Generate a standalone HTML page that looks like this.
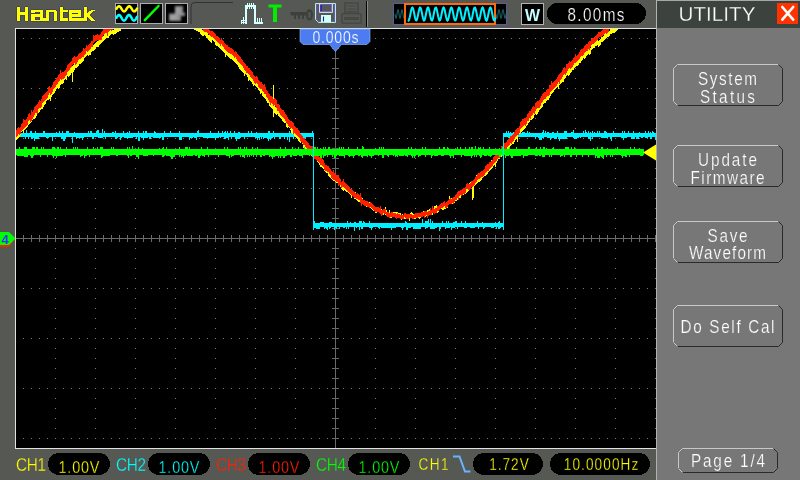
<!DOCTYPE html>
<html><head><meta charset="utf-8"><title>Hantek Utility</title>
<style>
html,body{margin:0;padding:0;background:#565854;overflow:hidden;}
svg{display:block;font-family:"Liberation Sans", sans-serif;will-change:transform;}
</style></head><body>
<svg width="800" height="480" viewBox="0 0 800 480">
<rect x="0" y="0" width="656" height="480" fill="#565854" shape-rendering="crispEdges" /><rect x="656" y="0" width="144" height="480" fill="#777777" shape-rendering="crispEdges" /><rect x="656" y="0" width="1" height="480" fill="#b4b0b8" shape-rendering="crispEdges" /><rect x="657" y="0" width="143" height="1" fill="#a8a8a8" shape-rendering="crispEdges" /><rect x="657" y="1" width="143" height="27" fill="#3c423d" shape-rendering="crispEdges" /><rect x="15" y="28" width="641" height="421" fill="#e0e0e0" shape-rendering="crispEdges" /><rect x="16" y="29" width="640" height="419" fill="#000000" shape-rendering="crispEdges" /><path d="M23 38h1v1h-1zM31 38h1v1h-1zM39 38h1v1h-1zM47 38h1v1h-1zM55 38h1v1h-1zM63 38h1v1h-1zM71 38h1v1h-1zM79 38h1v1h-1zM87 38h1v1h-1zM95 38h1v1h-1zM103 38h1v1h-1zM111 38h1v1h-1zM119 38h1v1h-1zM127 38h1v1h-1zM135 38h1v1h-1zM143 38h1v1h-1zM151 38h1v1h-1zM159 38h1v1h-1zM167 38h1v1h-1zM175 38h1v1h-1zM183 38h1v1h-1zM191 38h1v1h-1zM199 38h1v1h-1zM207 38h1v1h-1zM215 38h1v1h-1zM223 38h1v1h-1zM231 38h1v1h-1zM239 38h1v1h-1zM247 38h1v1h-1zM255 38h1v1h-1zM263 38h1v1h-1zM271 38h1v1h-1zM279 38h1v1h-1zM287 38h1v1h-1zM295 38h1v1h-1zM303 38h1v1h-1zM311 38h1v1h-1zM319 38h1v1h-1zM327 38h1v1h-1zM335 38h1v1h-1zM343 38h1v1h-1zM351 38h1v1h-1zM359 38h1v1h-1zM367 38h1v1h-1zM375 38h1v1h-1zM383 38h1v1h-1zM391 38h1v1h-1zM399 38h1v1h-1zM407 38h1v1h-1zM415 38h1v1h-1zM423 38h1v1h-1zM431 38h1v1h-1zM439 38h1v1h-1zM447 38h1v1h-1zM455 38h1v1h-1zM463 38h1v1h-1zM471 38h1v1h-1zM479 38h1v1h-1zM487 38h1v1h-1zM495 38h1v1h-1zM503 38h1v1h-1zM511 38h1v1h-1zM519 38h1v1h-1zM527 38h1v1h-1zM535 38h1v1h-1zM543 38h1v1h-1zM551 38h1v1h-1zM559 38h1v1h-1zM567 38h1v1h-1zM575 38h1v1h-1zM583 38h1v1h-1zM591 38h1v1h-1zM599 38h1v1h-1zM607 38h1v1h-1zM615 38h1v1h-1zM623 38h1v1h-1zM631 38h1v1h-1zM639 38h1v1h-1zM647 38h1v1h-1zM655 38h1v1h-1zM23 88h1v1h-1zM31 88h1v1h-1zM39 88h1v1h-1zM47 88h1v1h-1zM55 88h1v1h-1zM63 88h1v1h-1zM71 88h1v1h-1zM79 88h1v1h-1zM87 88h1v1h-1zM95 88h1v1h-1zM103 88h1v1h-1zM111 88h1v1h-1zM119 88h1v1h-1zM127 88h1v1h-1zM135 88h1v1h-1zM143 88h1v1h-1zM151 88h1v1h-1zM159 88h1v1h-1zM167 88h1v1h-1zM175 88h1v1h-1zM183 88h1v1h-1zM191 88h1v1h-1zM199 88h1v1h-1zM207 88h1v1h-1zM215 88h1v1h-1zM223 88h1v1h-1zM231 88h1v1h-1zM239 88h1v1h-1zM247 88h1v1h-1zM255 88h1v1h-1zM263 88h1v1h-1zM271 88h1v1h-1zM279 88h1v1h-1zM287 88h1v1h-1zM295 88h1v1h-1zM303 88h1v1h-1zM311 88h1v1h-1zM319 88h1v1h-1zM327 88h1v1h-1zM335 88h1v1h-1zM343 88h1v1h-1zM351 88h1v1h-1zM359 88h1v1h-1zM367 88h1v1h-1zM375 88h1v1h-1zM383 88h1v1h-1zM391 88h1v1h-1zM399 88h1v1h-1zM407 88h1v1h-1zM415 88h1v1h-1zM423 88h1v1h-1zM431 88h1v1h-1zM439 88h1v1h-1zM447 88h1v1h-1zM455 88h1v1h-1zM463 88h1v1h-1zM471 88h1v1h-1zM479 88h1v1h-1zM487 88h1v1h-1zM495 88h1v1h-1zM503 88h1v1h-1zM511 88h1v1h-1zM519 88h1v1h-1zM527 88h1v1h-1zM535 88h1v1h-1zM543 88h1v1h-1zM551 88h1v1h-1zM559 88h1v1h-1zM567 88h1v1h-1zM575 88h1v1h-1zM583 88h1v1h-1zM591 88h1v1h-1zM599 88h1v1h-1zM607 88h1v1h-1zM615 88h1v1h-1zM623 88h1v1h-1zM631 88h1v1h-1zM639 88h1v1h-1zM647 88h1v1h-1zM655 88h1v1h-1zM23 138h1v1h-1zM31 138h1v1h-1zM39 138h1v1h-1zM47 138h1v1h-1zM55 138h1v1h-1zM63 138h1v1h-1zM71 138h1v1h-1zM79 138h1v1h-1zM87 138h1v1h-1zM95 138h1v1h-1zM103 138h1v1h-1zM111 138h1v1h-1zM119 138h1v1h-1zM127 138h1v1h-1zM135 138h1v1h-1zM143 138h1v1h-1zM151 138h1v1h-1zM159 138h1v1h-1zM167 138h1v1h-1zM175 138h1v1h-1zM183 138h1v1h-1zM191 138h1v1h-1zM199 138h1v1h-1zM207 138h1v1h-1zM215 138h1v1h-1zM223 138h1v1h-1zM231 138h1v1h-1zM239 138h1v1h-1zM247 138h1v1h-1zM255 138h1v1h-1zM263 138h1v1h-1zM271 138h1v1h-1zM279 138h1v1h-1zM287 138h1v1h-1zM295 138h1v1h-1zM303 138h1v1h-1zM311 138h1v1h-1zM319 138h1v1h-1zM327 138h1v1h-1zM335 138h1v1h-1zM343 138h1v1h-1zM351 138h1v1h-1zM359 138h1v1h-1zM367 138h1v1h-1zM375 138h1v1h-1zM383 138h1v1h-1zM391 138h1v1h-1zM399 138h1v1h-1zM407 138h1v1h-1zM415 138h1v1h-1zM423 138h1v1h-1zM431 138h1v1h-1zM439 138h1v1h-1zM447 138h1v1h-1zM455 138h1v1h-1zM463 138h1v1h-1zM471 138h1v1h-1zM479 138h1v1h-1zM487 138h1v1h-1zM495 138h1v1h-1zM503 138h1v1h-1zM511 138h1v1h-1zM519 138h1v1h-1zM527 138h1v1h-1zM535 138h1v1h-1zM543 138h1v1h-1zM551 138h1v1h-1zM559 138h1v1h-1zM567 138h1v1h-1zM575 138h1v1h-1zM583 138h1v1h-1zM591 138h1v1h-1zM599 138h1v1h-1zM607 138h1v1h-1zM615 138h1v1h-1zM623 138h1v1h-1zM631 138h1v1h-1zM639 138h1v1h-1zM647 138h1v1h-1zM655 138h1v1h-1zM23 188h1v1h-1zM31 188h1v1h-1zM39 188h1v1h-1zM47 188h1v1h-1zM55 188h1v1h-1zM63 188h1v1h-1zM71 188h1v1h-1zM79 188h1v1h-1zM87 188h1v1h-1zM95 188h1v1h-1zM103 188h1v1h-1zM111 188h1v1h-1zM119 188h1v1h-1zM127 188h1v1h-1zM135 188h1v1h-1zM143 188h1v1h-1zM151 188h1v1h-1zM159 188h1v1h-1zM167 188h1v1h-1zM175 188h1v1h-1zM183 188h1v1h-1zM191 188h1v1h-1zM199 188h1v1h-1zM207 188h1v1h-1zM215 188h1v1h-1zM223 188h1v1h-1zM231 188h1v1h-1zM239 188h1v1h-1zM247 188h1v1h-1zM255 188h1v1h-1zM263 188h1v1h-1zM271 188h1v1h-1zM279 188h1v1h-1zM287 188h1v1h-1zM295 188h1v1h-1zM303 188h1v1h-1zM311 188h1v1h-1zM319 188h1v1h-1zM327 188h1v1h-1zM335 188h1v1h-1zM343 188h1v1h-1zM351 188h1v1h-1zM359 188h1v1h-1zM367 188h1v1h-1zM375 188h1v1h-1zM383 188h1v1h-1zM391 188h1v1h-1zM399 188h1v1h-1zM407 188h1v1h-1zM415 188h1v1h-1zM423 188h1v1h-1zM431 188h1v1h-1zM439 188h1v1h-1zM447 188h1v1h-1zM455 188h1v1h-1zM463 188h1v1h-1zM471 188h1v1h-1zM479 188h1v1h-1zM487 188h1v1h-1zM495 188h1v1h-1zM503 188h1v1h-1zM511 188h1v1h-1zM519 188h1v1h-1zM527 188h1v1h-1zM535 188h1v1h-1zM543 188h1v1h-1zM551 188h1v1h-1zM559 188h1v1h-1zM567 188h1v1h-1zM575 188h1v1h-1zM583 188h1v1h-1zM591 188h1v1h-1zM599 188h1v1h-1zM607 188h1v1h-1zM615 188h1v1h-1zM623 188h1v1h-1zM631 188h1v1h-1zM639 188h1v1h-1zM647 188h1v1h-1zM655 188h1v1h-1zM23 238h1v1h-1zM31 238h1v1h-1zM39 238h1v1h-1zM47 238h1v1h-1zM55 238h1v1h-1zM63 238h1v1h-1zM71 238h1v1h-1zM79 238h1v1h-1zM87 238h1v1h-1zM95 238h1v1h-1zM103 238h1v1h-1zM111 238h1v1h-1zM119 238h1v1h-1zM127 238h1v1h-1zM135 238h1v1h-1zM143 238h1v1h-1zM151 238h1v1h-1zM159 238h1v1h-1zM167 238h1v1h-1zM175 238h1v1h-1zM183 238h1v1h-1zM191 238h1v1h-1zM199 238h1v1h-1zM207 238h1v1h-1zM215 238h1v1h-1zM223 238h1v1h-1zM231 238h1v1h-1zM239 238h1v1h-1zM247 238h1v1h-1zM255 238h1v1h-1zM263 238h1v1h-1zM271 238h1v1h-1zM279 238h1v1h-1zM287 238h1v1h-1zM295 238h1v1h-1zM303 238h1v1h-1zM311 238h1v1h-1zM319 238h1v1h-1zM327 238h1v1h-1zM335 238h1v1h-1zM343 238h1v1h-1zM351 238h1v1h-1zM359 238h1v1h-1zM367 238h1v1h-1zM375 238h1v1h-1zM383 238h1v1h-1zM391 238h1v1h-1zM399 238h1v1h-1zM407 238h1v1h-1zM415 238h1v1h-1zM423 238h1v1h-1zM431 238h1v1h-1zM439 238h1v1h-1zM447 238h1v1h-1zM455 238h1v1h-1zM463 238h1v1h-1zM471 238h1v1h-1zM479 238h1v1h-1zM487 238h1v1h-1zM495 238h1v1h-1zM503 238h1v1h-1zM511 238h1v1h-1zM519 238h1v1h-1zM527 238h1v1h-1zM535 238h1v1h-1zM543 238h1v1h-1zM551 238h1v1h-1zM559 238h1v1h-1zM567 238h1v1h-1zM575 238h1v1h-1zM583 238h1v1h-1zM591 238h1v1h-1zM599 238h1v1h-1zM607 238h1v1h-1zM615 238h1v1h-1zM623 238h1v1h-1zM631 238h1v1h-1zM639 238h1v1h-1zM647 238h1v1h-1zM655 238h1v1h-1zM23 288h1v1h-1zM31 288h1v1h-1zM39 288h1v1h-1zM47 288h1v1h-1zM55 288h1v1h-1zM63 288h1v1h-1zM71 288h1v1h-1zM79 288h1v1h-1zM87 288h1v1h-1zM95 288h1v1h-1zM103 288h1v1h-1zM111 288h1v1h-1zM119 288h1v1h-1zM127 288h1v1h-1zM135 288h1v1h-1zM143 288h1v1h-1zM151 288h1v1h-1zM159 288h1v1h-1zM167 288h1v1h-1zM175 288h1v1h-1zM183 288h1v1h-1zM191 288h1v1h-1zM199 288h1v1h-1zM207 288h1v1h-1zM215 288h1v1h-1zM223 288h1v1h-1zM231 288h1v1h-1zM239 288h1v1h-1zM247 288h1v1h-1zM255 288h1v1h-1zM263 288h1v1h-1zM271 288h1v1h-1zM279 288h1v1h-1zM287 288h1v1h-1zM295 288h1v1h-1zM303 288h1v1h-1zM311 288h1v1h-1zM319 288h1v1h-1zM327 288h1v1h-1zM335 288h1v1h-1zM343 288h1v1h-1zM351 288h1v1h-1zM359 288h1v1h-1zM367 288h1v1h-1zM375 288h1v1h-1zM383 288h1v1h-1zM391 288h1v1h-1zM399 288h1v1h-1zM407 288h1v1h-1zM415 288h1v1h-1zM423 288h1v1h-1zM431 288h1v1h-1zM439 288h1v1h-1zM447 288h1v1h-1zM455 288h1v1h-1zM463 288h1v1h-1zM471 288h1v1h-1zM479 288h1v1h-1zM487 288h1v1h-1zM495 288h1v1h-1zM503 288h1v1h-1zM511 288h1v1h-1zM519 288h1v1h-1zM527 288h1v1h-1zM535 288h1v1h-1zM543 288h1v1h-1zM551 288h1v1h-1zM559 288h1v1h-1zM567 288h1v1h-1zM575 288h1v1h-1zM583 288h1v1h-1zM591 288h1v1h-1zM599 288h1v1h-1zM607 288h1v1h-1zM615 288h1v1h-1zM623 288h1v1h-1zM631 288h1v1h-1zM639 288h1v1h-1zM647 288h1v1h-1zM655 288h1v1h-1zM23 338h1v1h-1zM31 338h1v1h-1zM39 338h1v1h-1zM47 338h1v1h-1zM55 338h1v1h-1zM63 338h1v1h-1zM71 338h1v1h-1zM79 338h1v1h-1zM87 338h1v1h-1zM95 338h1v1h-1zM103 338h1v1h-1zM111 338h1v1h-1zM119 338h1v1h-1zM127 338h1v1h-1zM135 338h1v1h-1zM143 338h1v1h-1zM151 338h1v1h-1zM159 338h1v1h-1zM167 338h1v1h-1zM175 338h1v1h-1zM183 338h1v1h-1zM191 338h1v1h-1zM199 338h1v1h-1zM207 338h1v1h-1zM215 338h1v1h-1zM223 338h1v1h-1zM231 338h1v1h-1zM239 338h1v1h-1zM247 338h1v1h-1zM255 338h1v1h-1zM263 338h1v1h-1zM271 338h1v1h-1zM279 338h1v1h-1zM287 338h1v1h-1zM295 338h1v1h-1zM303 338h1v1h-1zM311 338h1v1h-1zM319 338h1v1h-1zM327 338h1v1h-1zM335 338h1v1h-1zM343 338h1v1h-1zM351 338h1v1h-1zM359 338h1v1h-1zM367 338h1v1h-1zM375 338h1v1h-1zM383 338h1v1h-1zM391 338h1v1h-1zM399 338h1v1h-1zM407 338h1v1h-1zM415 338h1v1h-1zM423 338h1v1h-1zM431 338h1v1h-1zM439 338h1v1h-1zM447 338h1v1h-1zM455 338h1v1h-1zM463 338h1v1h-1zM471 338h1v1h-1zM479 338h1v1h-1zM487 338h1v1h-1zM495 338h1v1h-1zM503 338h1v1h-1zM511 338h1v1h-1zM519 338h1v1h-1zM527 338h1v1h-1zM535 338h1v1h-1zM543 338h1v1h-1zM551 338h1v1h-1zM559 338h1v1h-1zM567 338h1v1h-1zM575 338h1v1h-1zM583 338h1v1h-1zM591 338h1v1h-1zM599 338h1v1h-1zM607 338h1v1h-1zM615 338h1v1h-1zM623 338h1v1h-1zM631 338h1v1h-1zM639 338h1v1h-1zM647 338h1v1h-1zM655 338h1v1h-1zM23 388h1v1h-1zM31 388h1v1h-1zM39 388h1v1h-1zM47 388h1v1h-1zM55 388h1v1h-1zM63 388h1v1h-1zM71 388h1v1h-1zM79 388h1v1h-1zM87 388h1v1h-1zM95 388h1v1h-1zM103 388h1v1h-1zM111 388h1v1h-1zM119 388h1v1h-1zM127 388h1v1h-1zM135 388h1v1h-1zM143 388h1v1h-1zM151 388h1v1h-1zM159 388h1v1h-1zM167 388h1v1h-1zM175 388h1v1h-1zM183 388h1v1h-1zM191 388h1v1h-1zM199 388h1v1h-1zM207 388h1v1h-1zM215 388h1v1h-1zM223 388h1v1h-1zM231 388h1v1h-1zM239 388h1v1h-1zM247 388h1v1h-1zM255 388h1v1h-1zM263 388h1v1h-1zM271 388h1v1h-1zM279 388h1v1h-1zM287 388h1v1h-1zM295 388h1v1h-1zM303 388h1v1h-1zM311 388h1v1h-1zM319 388h1v1h-1zM327 388h1v1h-1zM335 388h1v1h-1zM343 388h1v1h-1zM351 388h1v1h-1zM359 388h1v1h-1zM367 388h1v1h-1zM375 388h1v1h-1zM383 388h1v1h-1zM391 388h1v1h-1zM399 388h1v1h-1zM407 388h1v1h-1zM415 388h1v1h-1zM423 388h1v1h-1zM431 388h1v1h-1zM439 388h1v1h-1zM447 388h1v1h-1zM455 388h1v1h-1zM463 388h1v1h-1zM471 388h1v1h-1zM479 388h1v1h-1zM487 388h1v1h-1zM495 388h1v1h-1zM503 388h1v1h-1zM511 388h1v1h-1zM519 388h1v1h-1zM527 388h1v1h-1zM535 388h1v1h-1zM543 388h1v1h-1zM551 388h1v1h-1zM559 388h1v1h-1zM567 388h1v1h-1zM575 388h1v1h-1zM583 388h1v1h-1zM591 388h1v1h-1zM599 388h1v1h-1zM607 388h1v1h-1zM615 388h1v1h-1zM623 388h1v1h-1zM631 388h1v1h-1zM639 388h1v1h-1zM647 388h1v1h-1zM655 388h1v1h-1zM23 438h1v1h-1zM31 438h1v1h-1zM39 438h1v1h-1zM47 438h1v1h-1zM55 438h1v1h-1zM63 438h1v1h-1zM71 438h1v1h-1zM79 438h1v1h-1zM87 438h1v1h-1zM95 438h1v1h-1zM103 438h1v1h-1zM111 438h1v1h-1zM119 438h1v1h-1zM127 438h1v1h-1zM135 438h1v1h-1zM143 438h1v1h-1zM151 438h1v1h-1zM159 438h1v1h-1zM167 438h1v1h-1zM175 438h1v1h-1zM183 438h1v1h-1zM191 438h1v1h-1zM199 438h1v1h-1zM207 438h1v1h-1zM215 438h1v1h-1zM223 438h1v1h-1zM231 438h1v1h-1zM239 438h1v1h-1zM247 438h1v1h-1zM255 438h1v1h-1zM263 438h1v1h-1zM271 438h1v1h-1zM279 438h1v1h-1zM287 438h1v1h-1zM295 438h1v1h-1zM303 438h1v1h-1zM311 438h1v1h-1zM319 438h1v1h-1zM327 438h1v1h-1zM335 438h1v1h-1zM343 438h1v1h-1zM351 438h1v1h-1zM359 438h1v1h-1zM367 438h1v1h-1zM375 438h1v1h-1zM383 438h1v1h-1zM391 438h1v1h-1zM399 438h1v1h-1zM407 438h1v1h-1zM415 438h1v1h-1zM423 438h1v1h-1zM431 438h1v1h-1zM439 438h1v1h-1zM447 438h1v1h-1zM455 438h1v1h-1zM463 438h1v1h-1zM471 438h1v1h-1zM479 438h1v1h-1zM487 438h1v1h-1zM495 438h1v1h-1zM503 438h1v1h-1zM511 438h1v1h-1zM519 438h1v1h-1zM527 438h1v1h-1zM535 438h1v1h-1zM543 438h1v1h-1zM551 438h1v1h-1zM559 438h1v1h-1zM567 438h1v1h-1zM575 438h1v1h-1zM583 438h1v1h-1zM591 438h1v1h-1zM599 438h1v1h-1zM607 438h1v1h-1zM615 438h1v1h-1zM623 438h1v1h-1zM631 438h1v1h-1zM639 438h1v1h-1zM647 438h1v1h-1zM655 438h1v1h-1zM55 38h1v1h-1zM55 48h1v1h-1zM55 58h1v1h-1zM55 68h1v1h-1zM55 78h1v1h-1zM55 88h1v1h-1zM55 98h1v1h-1zM55 108h1v1h-1zM55 118h1v1h-1zM55 128h1v1h-1zM55 138h1v1h-1zM55 148h1v1h-1zM55 158h1v1h-1zM55 168h1v1h-1zM55 178h1v1h-1zM55 188h1v1h-1zM55 198h1v1h-1zM55 208h1v1h-1zM55 218h1v1h-1zM55 228h1v1h-1zM55 238h1v1h-1zM55 248h1v1h-1zM55 258h1v1h-1zM55 268h1v1h-1zM55 278h1v1h-1zM55 288h1v1h-1zM55 298h1v1h-1zM55 308h1v1h-1zM55 318h1v1h-1zM55 328h1v1h-1zM55 338h1v1h-1zM55 348h1v1h-1zM55 358h1v1h-1zM55 368h1v1h-1zM55 378h1v1h-1zM55 388h1v1h-1zM55 398h1v1h-1zM55 408h1v1h-1zM55 418h1v1h-1zM55 428h1v1h-1zM55 438h1v1h-1zM95 38h1v1h-1zM95 48h1v1h-1zM95 58h1v1h-1zM95 68h1v1h-1zM95 78h1v1h-1zM95 88h1v1h-1zM95 98h1v1h-1zM95 108h1v1h-1zM95 118h1v1h-1zM95 128h1v1h-1zM95 138h1v1h-1zM95 148h1v1h-1zM95 158h1v1h-1zM95 168h1v1h-1zM95 178h1v1h-1zM95 188h1v1h-1zM95 198h1v1h-1zM95 208h1v1h-1zM95 218h1v1h-1zM95 228h1v1h-1zM95 238h1v1h-1zM95 248h1v1h-1zM95 258h1v1h-1zM95 268h1v1h-1zM95 278h1v1h-1zM95 288h1v1h-1zM95 298h1v1h-1zM95 308h1v1h-1zM95 318h1v1h-1zM95 328h1v1h-1zM95 338h1v1h-1zM95 348h1v1h-1zM95 358h1v1h-1zM95 368h1v1h-1zM95 378h1v1h-1zM95 388h1v1h-1zM95 398h1v1h-1zM95 408h1v1h-1zM95 418h1v1h-1zM95 428h1v1h-1zM95 438h1v1h-1zM135 38h1v1h-1zM135 48h1v1h-1zM135 58h1v1h-1zM135 68h1v1h-1zM135 78h1v1h-1zM135 88h1v1h-1zM135 98h1v1h-1zM135 108h1v1h-1zM135 118h1v1h-1zM135 128h1v1h-1zM135 138h1v1h-1zM135 148h1v1h-1zM135 158h1v1h-1zM135 168h1v1h-1zM135 178h1v1h-1zM135 188h1v1h-1zM135 198h1v1h-1zM135 208h1v1h-1zM135 218h1v1h-1zM135 228h1v1h-1zM135 238h1v1h-1zM135 248h1v1h-1zM135 258h1v1h-1zM135 268h1v1h-1zM135 278h1v1h-1zM135 288h1v1h-1zM135 298h1v1h-1zM135 308h1v1h-1zM135 318h1v1h-1zM135 328h1v1h-1zM135 338h1v1h-1zM135 348h1v1h-1zM135 358h1v1h-1zM135 368h1v1h-1zM135 378h1v1h-1zM135 388h1v1h-1zM135 398h1v1h-1zM135 408h1v1h-1zM135 418h1v1h-1zM135 428h1v1h-1zM135 438h1v1h-1zM175 38h1v1h-1zM175 48h1v1h-1zM175 58h1v1h-1zM175 68h1v1h-1zM175 78h1v1h-1zM175 88h1v1h-1zM175 98h1v1h-1zM175 108h1v1h-1zM175 118h1v1h-1zM175 128h1v1h-1zM175 138h1v1h-1zM175 148h1v1h-1zM175 158h1v1h-1zM175 168h1v1h-1zM175 178h1v1h-1zM175 188h1v1h-1zM175 198h1v1h-1zM175 208h1v1h-1zM175 218h1v1h-1zM175 228h1v1h-1zM175 238h1v1h-1zM175 248h1v1h-1zM175 258h1v1h-1zM175 268h1v1h-1zM175 278h1v1h-1zM175 288h1v1h-1zM175 298h1v1h-1zM175 308h1v1h-1zM175 318h1v1h-1zM175 328h1v1h-1zM175 338h1v1h-1zM175 348h1v1h-1zM175 358h1v1h-1zM175 368h1v1h-1zM175 378h1v1h-1zM175 388h1v1h-1zM175 398h1v1h-1zM175 408h1v1h-1zM175 418h1v1h-1zM175 428h1v1h-1zM175 438h1v1h-1zM215 38h1v1h-1zM215 48h1v1h-1zM215 58h1v1h-1zM215 68h1v1h-1zM215 78h1v1h-1zM215 88h1v1h-1zM215 98h1v1h-1zM215 108h1v1h-1zM215 118h1v1h-1zM215 128h1v1h-1zM215 138h1v1h-1zM215 148h1v1h-1zM215 158h1v1h-1zM215 168h1v1h-1zM215 178h1v1h-1zM215 188h1v1h-1zM215 198h1v1h-1zM215 208h1v1h-1zM215 218h1v1h-1zM215 228h1v1h-1zM215 238h1v1h-1zM215 248h1v1h-1zM215 258h1v1h-1zM215 268h1v1h-1zM215 278h1v1h-1zM215 288h1v1h-1zM215 298h1v1h-1zM215 308h1v1h-1zM215 318h1v1h-1zM215 328h1v1h-1zM215 338h1v1h-1zM215 348h1v1h-1zM215 358h1v1h-1zM215 368h1v1h-1zM215 378h1v1h-1zM215 388h1v1h-1zM215 398h1v1h-1zM215 408h1v1h-1zM215 418h1v1h-1zM215 428h1v1h-1zM215 438h1v1h-1zM255 38h1v1h-1zM255 48h1v1h-1zM255 58h1v1h-1zM255 68h1v1h-1zM255 78h1v1h-1zM255 88h1v1h-1zM255 98h1v1h-1zM255 108h1v1h-1zM255 118h1v1h-1zM255 128h1v1h-1zM255 138h1v1h-1zM255 148h1v1h-1zM255 158h1v1h-1zM255 168h1v1h-1zM255 178h1v1h-1zM255 188h1v1h-1zM255 198h1v1h-1zM255 208h1v1h-1zM255 218h1v1h-1zM255 228h1v1h-1zM255 238h1v1h-1zM255 248h1v1h-1zM255 258h1v1h-1zM255 268h1v1h-1zM255 278h1v1h-1zM255 288h1v1h-1zM255 298h1v1h-1zM255 308h1v1h-1zM255 318h1v1h-1zM255 328h1v1h-1zM255 338h1v1h-1zM255 348h1v1h-1zM255 358h1v1h-1zM255 368h1v1h-1zM255 378h1v1h-1zM255 388h1v1h-1zM255 398h1v1h-1zM255 408h1v1h-1zM255 418h1v1h-1zM255 428h1v1h-1zM255 438h1v1h-1zM295 38h1v1h-1zM295 48h1v1h-1zM295 58h1v1h-1zM295 68h1v1h-1zM295 78h1v1h-1zM295 88h1v1h-1zM295 98h1v1h-1zM295 108h1v1h-1zM295 118h1v1h-1zM295 128h1v1h-1zM295 138h1v1h-1zM295 148h1v1h-1zM295 158h1v1h-1zM295 168h1v1h-1zM295 178h1v1h-1zM295 188h1v1h-1zM295 198h1v1h-1zM295 208h1v1h-1zM295 218h1v1h-1zM295 228h1v1h-1zM295 238h1v1h-1zM295 248h1v1h-1zM295 258h1v1h-1zM295 268h1v1h-1zM295 278h1v1h-1zM295 288h1v1h-1zM295 298h1v1h-1zM295 308h1v1h-1zM295 318h1v1h-1zM295 328h1v1h-1zM295 338h1v1h-1zM295 348h1v1h-1zM295 358h1v1h-1zM295 368h1v1h-1zM295 378h1v1h-1zM295 388h1v1h-1zM295 398h1v1h-1zM295 408h1v1h-1zM295 418h1v1h-1zM295 428h1v1h-1zM295 438h1v1h-1zM335 38h1v1h-1zM335 48h1v1h-1zM335 58h1v1h-1zM335 68h1v1h-1zM335 78h1v1h-1zM335 88h1v1h-1zM335 98h1v1h-1zM335 108h1v1h-1zM335 118h1v1h-1zM335 128h1v1h-1zM335 138h1v1h-1zM335 148h1v1h-1zM335 158h1v1h-1zM335 168h1v1h-1zM335 178h1v1h-1zM335 188h1v1h-1zM335 198h1v1h-1zM335 208h1v1h-1zM335 218h1v1h-1zM335 228h1v1h-1zM335 238h1v1h-1zM335 248h1v1h-1zM335 258h1v1h-1zM335 268h1v1h-1zM335 278h1v1h-1zM335 288h1v1h-1zM335 298h1v1h-1zM335 308h1v1h-1zM335 318h1v1h-1zM335 328h1v1h-1zM335 338h1v1h-1zM335 348h1v1h-1zM335 358h1v1h-1zM335 368h1v1h-1zM335 378h1v1h-1zM335 388h1v1h-1zM335 398h1v1h-1zM335 408h1v1h-1zM335 418h1v1h-1zM335 428h1v1h-1zM335 438h1v1h-1zM375 38h1v1h-1zM375 48h1v1h-1zM375 58h1v1h-1zM375 68h1v1h-1zM375 78h1v1h-1zM375 88h1v1h-1zM375 98h1v1h-1zM375 108h1v1h-1zM375 118h1v1h-1zM375 128h1v1h-1zM375 138h1v1h-1zM375 148h1v1h-1zM375 158h1v1h-1zM375 168h1v1h-1zM375 178h1v1h-1zM375 188h1v1h-1zM375 198h1v1h-1zM375 208h1v1h-1zM375 218h1v1h-1zM375 228h1v1h-1zM375 238h1v1h-1zM375 248h1v1h-1zM375 258h1v1h-1zM375 268h1v1h-1zM375 278h1v1h-1zM375 288h1v1h-1zM375 298h1v1h-1zM375 308h1v1h-1zM375 318h1v1h-1zM375 328h1v1h-1zM375 338h1v1h-1zM375 348h1v1h-1zM375 358h1v1h-1zM375 368h1v1h-1zM375 378h1v1h-1zM375 388h1v1h-1zM375 398h1v1h-1zM375 408h1v1h-1zM375 418h1v1h-1zM375 428h1v1h-1zM375 438h1v1h-1zM415 38h1v1h-1zM415 48h1v1h-1zM415 58h1v1h-1zM415 68h1v1h-1zM415 78h1v1h-1zM415 88h1v1h-1zM415 98h1v1h-1zM415 108h1v1h-1zM415 118h1v1h-1zM415 128h1v1h-1zM415 138h1v1h-1zM415 148h1v1h-1zM415 158h1v1h-1zM415 168h1v1h-1zM415 178h1v1h-1zM415 188h1v1h-1zM415 198h1v1h-1zM415 208h1v1h-1zM415 218h1v1h-1zM415 228h1v1h-1zM415 238h1v1h-1zM415 248h1v1h-1zM415 258h1v1h-1zM415 268h1v1h-1zM415 278h1v1h-1zM415 288h1v1h-1zM415 298h1v1h-1zM415 308h1v1h-1zM415 318h1v1h-1zM415 328h1v1h-1zM415 338h1v1h-1zM415 348h1v1h-1zM415 358h1v1h-1zM415 368h1v1h-1zM415 378h1v1h-1zM415 388h1v1h-1zM415 398h1v1h-1zM415 408h1v1h-1zM415 418h1v1h-1zM415 428h1v1h-1zM415 438h1v1h-1zM455 38h1v1h-1zM455 48h1v1h-1zM455 58h1v1h-1zM455 68h1v1h-1zM455 78h1v1h-1zM455 88h1v1h-1zM455 98h1v1h-1zM455 108h1v1h-1zM455 118h1v1h-1zM455 128h1v1h-1zM455 138h1v1h-1zM455 148h1v1h-1zM455 158h1v1h-1zM455 168h1v1h-1zM455 178h1v1h-1zM455 188h1v1h-1zM455 198h1v1h-1zM455 208h1v1h-1zM455 218h1v1h-1zM455 228h1v1h-1zM455 238h1v1h-1zM455 248h1v1h-1zM455 258h1v1h-1zM455 268h1v1h-1zM455 278h1v1h-1zM455 288h1v1h-1zM455 298h1v1h-1zM455 308h1v1h-1zM455 318h1v1h-1zM455 328h1v1h-1zM455 338h1v1h-1zM455 348h1v1h-1zM455 358h1v1h-1zM455 368h1v1h-1zM455 378h1v1h-1zM455 388h1v1h-1zM455 398h1v1h-1zM455 408h1v1h-1zM455 418h1v1h-1zM455 428h1v1h-1zM455 438h1v1h-1zM495 38h1v1h-1zM495 48h1v1h-1zM495 58h1v1h-1zM495 68h1v1h-1zM495 78h1v1h-1zM495 88h1v1h-1zM495 98h1v1h-1zM495 108h1v1h-1zM495 118h1v1h-1zM495 128h1v1h-1zM495 138h1v1h-1zM495 148h1v1h-1zM495 158h1v1h-1zM495 168h1v1h-1zM495 178h1v1h-1zM495 188h1v1h-1zM495 198h1v1h-1zM495 208h1v1h-1zM495 218h1v1h-1zM495 228h1v1h-1zM495 238h1v1h-1zM495 248h1v1h-1zM495 258h1v1h-1zM495 268h1v1h-1zM495 278h1v1h-1zM495 288h1v1h-1zM495 298h1v1h-1zM495 308h1v1h-1zM495 318h1v1h-1zM495 328h1v1h-1zM495 338h1v1h-1zM495 348h1v1h-1zM495 358h1v1h-1zM495 368h1v1h-1zM495 378h1v1h-1zM495 388h1v1h-1zM495 398h1v1h-1zM495 408h1v1h-1zM495 418h1v1h-1zM495 428h1v1h-1zM495 438h1v1h-1zM535 38h1v1h-1zM535 48h1v1h-1zM535 58h1v1h-1zM535 68h1v1h-1zM535 78h1v1h-1zM535 88h1v1h-1zM535 98h1v1h-1zM535 108h1v1h-1zM535 118h1v1h-1zM535 128h1v1h-1zM535 138h1v1h-1zM535 148h1v1h-1zM535 158h1v1h-1zM535 168h1v1h-1zM535 178h1v1h-1zM535 188h1v1h-1zM535 198h1v1h-1zM535 208h1v1h-1zM535 218h1v1h-1zM535 228h1v1h-1zM535 238h1v1h-1zM535 248h1v1h-1zM535 258h1v1h-1zM535 268h1v1h-1zM535 278h1v1h-1zM535 288h1v1h-1zM535 298h1v1h-1zM535 308h1v1h-1zM535 318h1v1h-1zM535 328h1v1h-1zM535 338h1v1h-1zM535 348h1v1h-1zM535 358h1v1h-1zM535 368h1v1h-1zM535 378h1v1h-1zM535 388h1v1h-1zM535 398h1v1h-1zM535 408h1v1h-1zM535 418h1v1h-1zM535 428h1v1h-1zM535 438h1v1h-1zM575 38h1v1h-1zM575 48h1v1h-1zM575 58h1v1h-1zM575 68h1v1h-1zM575 78h1v1h-1zM575 88h1v1h-1zM575 98h1v1h-1zM575 108h1v1h-1zM575 118h1v1h-1zM575 128h1v1h-1zM575 138h1v1h-1zM575 148h1v1h-1zM575 158h1v1h-1zM575 168h1v1h-1zM575 178h1v1h-1zM575 188h1v1h-1zM575 198h1v1h-1zM575 208h1v1h-1zM575 218h1v1h-1zM575 228h1v1h-1zM575 238h1v1h-1zM575 248h1v1h-1zM575 258h1v1h-1zM575 268h1v1h-1zM575 278h1v1h-1zM575 288h1v1h-1zM575 298h1v1h-1zM575 308h1v1h-1zM575 318h1v1h-1zM575 328h1v1h-1zM575 338h1v1h-1zM575 348h1v1h-1zM575 358h1v1h-1zM575 368h1v1h-1zM575 378h1v1h-1zM575 388h1v1h-1zM575 398h1v1h-1zM575 408h1v1h-1zM575 418h1v1h-1zM575 428h1v1h-1zM575 438h1v1h-1zM615 38h1v1h-1zM615 48h1v1h-1zM615 58h1v1h-1zM615 68h1v1h-1zM615 78h1v1h-1zM615 88h1v1h-1zM615 98h1v1h-1zM615 108h1v1h-1zM615 118h1v1h-1zM615 128h1v1h-1zM615 138h1v1h-1zM615 148h1v1h-1zM615 158h1v1h-1zM615 168h1v1h-1zM615 178h1v1h-1zM615 188h1v1h-1zM615 198h1v1h-1zM615 208h1v1h-1zM615 218h1v1h-1zM615 228h1v1h-1zM615 238h1v1h-1zM615 248h1v1h-1zM615 258h1v1h-1zM615 268h1v1h-1zM615 278h1v1h-1zM615 288h1v1h-1zM615 298h1v1h-1zM615 308h1v1h-1zM615 318h1v1h-1zM615 328h1v1h-1zM615 338h1v1h-1zM615 348h1v1h-1zM615 358h1v1h-1zM615 368h1v1h-1zM615 378h1v1h-1zM615 388h1v1h-1zM615 398h1v1h-1zM615 408h1v1h-1zM615 418h1v1h-1zM615 428h1v1h-1zM615 438h1v1h-1zM655 38h1v1h-1zM655 48h1v1h-1zM655 58h1v1h-1zM655 68h1v1h-1zM655 78h1v1h-1zM655 88h1v1h-1zM655 98h1v1h-1zM655 108h1v1h-1zM655 118h1v1h-1zM655 128h1v1h-1zM655 138h1v1h-1zM655 148h1v1h-1zM655 158h1v1h-1zM655 168h1v1h-1zM655 178h1v1h-1zM655 188h1v1h-1zM655 198h1v1h-1zM655 208h1v1h-1zM655 218h1v1h-1zM655 228h1v1h-1zM655 238h1v1h-1zM655 248h1v1h-1zM655 258h1v1h-1zM655 268h1v1h-1zM655 278h1v1h-1zM655 288h1v1h-1zM655 298h1v1h-1zM655 308h1v1h-1zM655 318h1v1h-1zM655 328h1v1h-1zM655 338h1v1h-1zM655 348h1v1h-1zM655 358h1v1h-1zM655 368h1v1h-1zM655 378h1v1h-1zM655 388h1v1h-1zM655 398h1v1h-1zM655 408h1v1h-1zM655 418h1v1h-1zM655 428h1v1h-1zM655 438h1v1h-1z" fill="#7c7c7c" shape-rendering="crispEdges"/><path d="M16 238h640v1h-640zM335 29h1v419h-1zM23 235h1v7h-1zM31 235h1v7h-1zM39 235h1v7h-1zM47 235h1v7h-1zM55 235h1v7h-1zM63 235h1v7h-1zM71 235h1v7h-1zM79 235h1v7h-1zM87 235h1v7h-1zM95 235h1v7h-1zM103 235h1v7h-1zM111 235h1v7h-1zM119 235h1v7h-1zM127 235h1v7h-1zM135 235h1v7h-1zM143 235h1v7h-1zM151 235h1v7h-1zM159 235h1v7h-1zM167 235h1v7h-1zM175 235h1v7h-1zM183 235h1v7h-1zM191 235h1v7h-1zM199 235h1v7h-1zM207 235h1v7h-1zM215 235h1v7h-1zM223 235h1v7h-1zM231 235h1v7h-1zM239 235h1v7h-1zM247 235h1v7h-1zM255 235h1v7h-1zM263 235h1v7h-1zM271 235h1v7h-1zM279 235h1v7h-1zM287 235h1v7h-1zM295 235h1v7h-1zM303 235h1v7h-1zM311 235h1v7h-1zM319 235h1v7h-1zM327 235h1v7h-1zM335 235h1v7h-1zM343 235h1v7h-1zM351 235h1v7h-1zM359 235h1v7h-1zM367 235h1v7h-1zM375 235h1v7h-1zM383 235h1v7h-1zM391 235h1v7h-1zM399 235h1v7h-1zM407 235h1v7h-1zM415 235h1v7h-1zM423 235h1v7h-1zM431 235h1v7h-1zM439 235h1v7h-1zM447 235h1v7h-1zM455 235h1v7h-1zM463 235h1v7h-1zM471 235h1v7h-1zM479 235h1v7h-1zM487 235h1v7h-1zM495 235h1v7h-1zM503 235h1v7h-1zM511 235h1v7h-1zM519 235h1v7h-1zM527 235h1v7h-1zM535 235h1v7h-1zM543 235h1v7h-1zM551 235h1v7h-1zM559 235h1v7h-1zM567 235h1v7h-1zM575 235h1v7h-1zM583 235h1v7h-1zM591 235h1v7h-1zM599 235h1v7h-1zM607 235h1v7h-1zM615 235h1v7h-1zM623 235h1v7h-1zM631 235h1v7h-1zM639 235h1v7h-1zM647 235h1v7h-1zM655 235h1v7h-1zM332 38h7v1h-7zM332 48h7v1h-7zM332 58h7v1h-7zM332 68h7v1h-7zM332 78h7v1h-7zM332 88h7v1h-7zM332 98h7v1h-7zM332 108h7v1h-7zM332 118h7v1h-7zM332 128h7v1h-7zM332 138h7v1h-7zM332 148h7v1h-7zM332 158h7v1h-7zM332 168h7v1h-7zM332 178h7v1h-7zM332 188h7v1h-7zM332 198h7v1h-7zM332 208h7v1h-7zM332 218h7v1h-7zM332 228h7v1h-7zM332 238h7v1h-7zM332 248h7v1h-7zM332 258h7v1h-7zM332 268h7v1h-7zM332 278h7v1h-7zM332 288h7v1h-7zM332 298h7v1h-7zM332 308h7v1h-7zM332 318h7v1h-7zM332 328h7v1h-7zM332 338h7v1h-7zM332 348h7v1h-7zM332 358h7v1h-7zM332 368h7v1h-7zM332 378h7v1h-7zM332 388h7v1h-7zM332 398h7v1h-7zM332 408h7v1h-7zM332 418h7v1h-7zM332 428h7v1h-7zM332 438h7v1h-7z" fill="#6a6a6a" shape-rendering="crispEdges"/><path d="M16 133h1v4h-1zM17 133h1v4h-1zM18 133h1v4h-1zM19 133h1v4h-1zM20 131h1v6h-1zM21 133h1v4h-1zM22 133h1v4h-1zM23 133h1v4h-1zM24 133h1v4h-1zM25 133h1v6h-1zM26 130h1v7h-1zM27 133h1v4h-1zM28 133h1v6h-1zM29 133h1v4h-1zM30 131h1v6h-1zM31 131h1v8h-1zM32 133h1v6h-1zM33 133h1v5h-1zM34 133h1v8h-1zM35 131h1v8h-1zM36 133h1v6h-1zM37 133h1v6h-1zM38 133h1v6h-1zM39 133h1v4h-1zM40 133h1v4h-1zM41 133h1v4h-1zM42 133h1v4h-1zM43 131h1v6h-1zM44 131h1v6h-1zM45 133h1v4h-1zM46 133h1v5h-1zM47 133h1v5h-1zM48 133h1v5h-1zM49 133h1v4h-1zM50 133h1v4h-1zM51 133h1v4h-1zM52 133h1v8h-1zM53 133h1v4h-1zM54 133h1v4h-1zM55 133h1v4h-1zM56 132h1v5h-1zM57 133h1v4h-1zM58 133h1v4h-1zM59 131h1v6h-1zM60 133h1v4h-1zM61 133h1v6h-1zM62 131h1v8h-1zM63 133h1v8h-1zM64 133h1v8h-1zM65 133h1v6h-1zM66 131h1v6h-1zM67 131h1v6h-1zM68 131h1v6h-1zM69 133h1v4h-1zM70 133h1v4h-1zM71 133h1v4h-1zM72 133h1v10h-1zM73 133h1v4h-1zM74 132h1v5h-1zM75 133h1v4h-1zM76 133h1v6h-1zM77 133h1v5h-1zM78 133h1v5h-1zM79 133h1v5h-1zM80 133h1v5h-1zM81 133h1v5h-1zM82 133h1v7h-1zM83 133h1v5h-1zM84 133h1v4h-1zM85 133h1v4h-1zM86 133h1v4h-1zM87 133h1v4h-1zM88 131h1v6h-1zM89 133h1v4h-1zM90 131h1v6h-1zM91 131h1v6h-1zM92 133h1v6h-1zM93 133h1v6h-1zM94 133h1v4h-1zM95 133h1v4h-1zM96 131h1v6h-1zM97 130h1v7h-1zM98 130h1v8h-1zM99 133h1v5h-1zM100 133h1v5h-1zM101 133h1v5h-1zM102 129h1v9h-1zM103 133h1v4h-1zM104 131h1v6h-1zM105 133h1v6h-1zM106 133h1v4h-1zM107 133h1v4h-1zM108 133h1v4h-1zM109 133h1v4h-1zM110 133h1v4h-1zM111 133h1v4h-1zM112 132h1v5h-1zM113 132h1v5h-1zM114 133h1v4h-1zM115 131h1v8h-1zM116 133h1v6h-1zM117 133h1v5h-1zM118 133h1v4h-1zM119 133h1v4h-1zM120 133h1v7h-1zM121 133h1v5h-1zM122 133h1v4h-1zM123 131h1v6h-1zM124 133h1v5h-1zM125 133h1v5h-1zM126 133h1v5h-1zM127 132h1v7h-1zM128 133h1v5h-1zM129 131h1v7h-1zM130 133h1v5h-1zM131 133h1v5h-1zM132 133h1v5h-1zM133 133h1v4h-1zM134 133h1v4h-1zM135 133h1v4h-1zM136 133h1v6h-1zM137 133h1v4h-1zM138 131h1v10h-1zM139 133h1v8h-1zM140 133h1v4h-1zM141 133h1v5h-1zM142 133h1v5h-1zM143 131h1v9h-1zM144 133h1v5h-1zM145 131h1v7h-1zM146 131h1v7h-1zM147 133h1v5h-1zM148 133h1v4h-1zM149 133h1v6h-1zM150 133h1v6h-1zM151 133h1v4h-1zM152 133h1v4h-1zM153 133h1v5h-1zM154 131h1v7h-1zM155 132h1v6h-1zM156 133h1v5h-1zM157 133h1v5h-1zM158 133h1v5h-1zM159 133h1v5h-1zM160 133h1v5h-1zM161 133h1v4h-1zM162 133h1v7h-1zM163 133h1v7h-1zM164 131h1v6h-1zM165 133h1v4h-1zM166 133h1v4h-1zM167 133h1v4h-1zM168 133h1v4h-1zM169 133h1v4h-1zM170 131h1v6h-1zM171 133h1v4h-1zM172 133h1v4h-1zM173 133h1v4h-1zM174 133h1v4h-1zM175 133h1v4h-1zM176 133h1v4h-1zM177 133h1v4h-1zM178 133h1v4h-1zM179 131h1v9h-1zM180 133h1v7h-1zM181 133h1v7h-1zM182 133h1v4h-1zM183 133h1v4h-1zM184 133h1v4h-1zM185 133h1v4h-1zM186 133h1v4h-1zM187 133h1v4h-1zM188 133h1v4h-1zM189 133h1v7h-1zM190 133h1v5h-1zM191 133h1v5h-1zM192 133h1v5h-1zM193 133h1v4h-1zM194 133h1v5h-1zM195 133h1v5h-1zM196 133h1v7h-1zM197 131h1v6h-1zM198 130h1v7h-1zM199 133h1v4h-1zM200 133h1v4h-1zM201 133h1v4h-1zM202 133h1v4h-1zM203 133h1v5h-1zM204 133h1v5h-1zM205 133h1v5h-1zM206 133h1v5h-1zM207 133h1v5h-1zM208 133h1v5h-1zM209 133h1v5h-1zM210 131h1v7h-1zM211 133h1v5h-1zM212 133h1v5h-1zM213 133h1v5h-1zM214 133h1v5h-1zM215 133h1v7h-1zM216 133h1v5h-1zM217 133h1v5h-1zM218 131h1v7h-1zM219 133h1v4h-1zM220 133h1v5h-1zM221 133h1v4h-1zM222 131h1v6h-1zM223 133h1v4h-1zM224 132h1v7h-1zM225 131h1v8h-1zM226 133h1v5h-1zM227 131h1v7h-1zM228 133h1v7h-1zM229 133h1v4h-1zM230 131h1v6h-1zM231 133h1v6h-1zM232 133h1v4h-1zM233 133h1v4h-1zM234 131h1v6h-1zM235 133h1v6h-1zM236 133h1v8h-1zM237 133h1v6h-1zM238 132h1v7h-1zM239 132h1v7h-1zM240 133h1v5h-1zM241 133h1v4h-1zM242 133h1v4h-1zM243 133h1v4h-1zM244 133h1v6h-1zM245 133h1v4h-1zM246 133h1v4h-1zM247 133h1v4h-1zM248 131h1v6h-1zM249 133h1v4h-1zM250 133h1v4h-1zM251 131h1v6h-1zM252 133h1v4h-1zM253 133h1v4h-1zM254 133h1v4h-1zM255 133h1v5h-1zM256 132h1v6h-1zM257 133h1v7h-1zM258 133h1v5h-1zM259 133h1v7h-1zM260 133h1v4h-1zM261 133h1v6h-1zM262 133h1v4h-1zM263 133h1v6h-1zM264 133h1v5h-1zM265 133h1v5h-1zM266 133h1v5h-1zM267 133h1v6h-1zM268 131h1v10h-1zM269 131h1v8h-1zM270 133h1v7h-1zM271 133h1v5h-1zM272 133h1v5h-1zM273 131h1v6h-1zM274 133h1v6h-1zM275 133h1v4h-1zM276 133h1v4h-1zM277 133h1v4h-1zM278 133h1v4h-1zM279 133h1v6h-1zM280 133h1v6h-1zM281 133h1v4h-1zM282 133h1v4h-1zM283 133h1v4h-1zM284 133h1v6h-1zM285 133h1v4h-1zM286 133h1v4h-1zM287 133h1v7h-1zM288 133h1v4h-1zM289 131h1v11h-1zM290 133h1v4h-1zM291 133h1v4h-1zM292 133h1v4h-1zM293 133h1v6h-1zM294 133h1v4h-1zM295 133h1v4h-1zM296 133h1v4h-1zM297 133h1v4h-1zM298 133h1v5h-1zM299 133h1v4h-1zM300 133h1v4h-1zM301 133h1v4h-1zM302 133h1v4h-1zM303 133h1v5h-1zM304 133h1v7h-1zM305 133h1v6h-1zM306 133h1v4h-1zM307 133h1v4h-1zM308 133h1v4h-1zM309 133h1v4h-1zM310 133h1v4h-1zM311 133h1v4h-1zM312 131h1v6h-1zM313 133h1v97h-1zM314 221h1v7h-1zM315 223h1v5h-1zM316 223h1v6h-1zM317 223h1v6h-1zM318 223h1v6h-1zM319 223h1v6h-1zM320 222h1v5h-1zM321 222h1v5h-1zM322 222h1v5h-1zM323 222h1v5h-1zM324 223h1v6h-1zM325 223h1v5h-1zM326 223h1v6h-1zM327 223h1v7h-1zM328 223h1v4h-1zM329 222h1v7h-1zM330 222h1v6h-1zM331 222h1v5h-1zM332 223h1v4h-1zM333 223h1v4h-1zM334 223h1v7h-1zM335 223h1v5h-1zM336 223h1v6h-1zM337 223h1v4h-1zM338 223h1v4h-1zM339 223h1v6h-1zM340 223h1v4h-1zM341 223h1v4h-1zM342 223h1v4h-1zM343 223h1v5h-1zM344 223h1v5h-1zM345 223h1v4h-1zM346 223h1v6h-1zM347 221h1v6h-1zM348 223h1v6h-1zM349 223h1v4h-1zM350 222h1v5h-1zM351 223h1v4h-1zM352 223h1v4h-1zM353 223h1v4h-1zM354 222h1v9h-1zM355 222h1v5h-1zM356 223h1v5h-1zM357 223h1v4h-1zM358 223h1v4h-1zM359 221h1v9h-1zM360 221h1v6h-1zM361 221h1v8h-1zM362 223h1v6h-1zM363 221h1v6h-1zM364 222h1v5h-1zM365 223h1v4h-1zM366 223h1v4h-1zM367 223h1v4h-1zM368 223h1v4h-1zM369 221h1v7h-1zM370 223h1v5h-1zM371 223h1v7h-1zM372 223h1v5h-1zM373 223h1v4h-1zM374 223h1v4h-1zM375 223h1v4h-1zM376 223h1v4h-1zM377 223h1v4h-1zM378 223h1v5h-1zM379 223h1v6h-1zM380 223h1v4h-1zM381 223h1v5h-1zM382 223h1v5h-1zM383 223h1v5h-1zM384 223h1v5h-1zM385 223h1v5h-1zM386 223h1v5h-1zM387 223h1v5h-1zM388 223h1v5h-1zM389 223h1v5h-1zM390 223h1v5h-1zM391 223h1v7h-1zM392 223h1v5h-1zM393 223h1v5h-1zM394 223h1v5h-1zM395 223h1v5h-1zM396 223h1v4h-1zM397 223h1v4h-1zM398 223h1v4h-1zM399 223h1v4h-1zM400 223h1v4h-1zM401 223h1v5h-1zM402 223h1v7h-1zM403 223h1v5h-1zM404 223h1v4h-1zM405 221h1v6h-1zM406 222h1v8h-1zM407 223h1v7h-1zM408 223h1v5h-1zM409 223h1v5h-1zM410 223h1v5h-1zM411 223h1v4h-1zM412 223h1v4h-1zM413 223h1v6h-1zM414 223h1v6h-1zM415 223h1v6h-1zM416 223h1v6h-1zM417 223h1v6h-1zM418 223h1v6h-1zM419 223h1v6h-1zM420 223h1v6h-1zM421 223h1v4h-1zM422 219h1v8h-1zM423 223h1v4h-1zM424 223h1v4h-1zM425 221h1v8h-1zM426 221h1v7h-1zM427 221h1v7h-1zM428 219h1v8h-1zM429 223h1v4h-1zM430 219h1v10h-1zM431 223h1v6h-1zM432 221h1v8h-1zM433 223h1v6h-1zM434 223h1v6h-1zM435 223h1v5h-1zM436 223h1v5h-1zM437 223h1v4h-1zM438 223h1v4h-1zM439 223h1v8h-1zM440 223h1v6h-1zM441 223h1v4h-1zM442 221h1v6h-1zM443 223h1v4h-1zM444 223h1v4h-1zM445 223h1v6h-1zM446 221h1v7h-1zM447 223h1v5h-1zM448 221h1v7h-1zM449 223h1v5h-1zM450 223h1v4h-1zM451 223h1v7h-1zM452 223h1v5h-1zM453 222h1v6h-1zM454 222h1v6h-1zM455 221h1v6h-1zM456 221h1v6h-1zM457 223h1v6h-1zM458 223h1v4h-1zM459 223h1v4h-1zM460 223h1v4h-1zM461 221h1v6h-1zM462 223h1v4h-1zM463 223h1v4h-1zM464 223h1v5h-1zM465 221h1v7h-1zM466 223h1v5h-1zM467 223h1v4h-1zM468 223h1v4h-1zM469 223h1v4h-1zM470 223h1v5h-1zM471 223h1v5h-1zM472 223h1v5h-1zM473 223h1v5h-1zM474 223h1v5h-1zM475 223h1v4h-1zM476 223h1v4h-1zM477 221h1v6h-1zM478 223h1v6h-1zM479 223h1v4h-1zM480 223h1v4h-1zM481 223h1v4h-1zM482 222h1v5h-1zM483 223h1v6h-1zM484 223h1v5h-1zM485 223h1v4h-1zM486 223h1v4h-1zM487 223h1v4h-1zM488 223h1v4h-1zM489 223h1v4h-1zM490 223h1v4h-1zM491 223h1v5h-1zM492 223h1v5h-1zM493 223h1v5h-1zM494 223h1v4h-1zM495 222h1v5h-1zM496 223h1v6h-1zM497 223h1v4h-1zM498 222h1v7h-1zM499 221h1v8h-1zM500 223h1v5h-1zM501 223h1v4h-1zM502 223h1v4h-1zM503 133h1v97h-1zM504 133h1v4h-1zM505 133h1v4h-1zM506 131h1v6h-1zM507 133h1v4h-1zM508 131h1v7h-1zM509 133h1v6h-1zM510 132h1v5h-1zM511 133h1v4h-1zM512 133h1v4h-1zM513 132h1v5h-1zM514 132h1v6h-1zM515 131h1v7h-1zM516 133h1v5h-1zM517 132h1v5h-1zM518 133h1v4h-1zM519 133h1v4h-1zM520 133h1v4h-1zM521 133h1v4h-1zM522 132h1v5h-1zM523 132h1v5h-1zM524 132h1v5h-1zM525 133h1v4h-1zM526 133h1v4h-1zM527 131h1v6h-1zM528 133h1v4h-1zM529 132h1v5h-1zM530 133h1v4h-1zM531 133h1v4h-1zM532 133h1v4h-1zM533 133h1v4h-1zM534 133h1v4h-1zM535 133h1v6h-1zM536 133h1v4h-1zM537 133h1v4h-1zM538 133h1v5h-1zM539 133h1v7h-1zM540 133h1v7h-1zM541 133h1v7h-1zM542 132h1v6h-1zM543 130h1v8h-1zM544 133h1v4h-1zM545 131h1v6h-1zM546 133h1v4h-1zM547 132h1v6h-1zM548 132h1v6h-1zM549 133h1v5h-1zM550 133h1v7h-1zM551 133h1v5h-1zM552 132h1v6h-1zM553 132h1v6h-1zM554 133h1v6h-1zM555 133h1v6h-1zM556 133h1v6h-1zM557 131h1v6h-1zM558 133h1v6h-1zM559 133h1v8h-1zM560 133h1v6h-1zM561 133h1v6h-1zM562 133h1v6h-1zM563 133h1v6h-1zM564 131h1v8h-1zM565 131h1v8h-1zM566 131h1v8h-1zM567 133h1v4h-1zM568 133h1v4h-1zM569 133h1v4h-1zM570 133h1v4h-1zM571 132h1v5h-1zM572 132h1v5h-1zM573 130h1v8h-1zM574 133h1v6h-1zM575 133h1v6h-1zM576 133h1v6h-1zM577 133h1v5h-1zM578 133h1v5h-1zM579 133h1v4h-1zM580 133h1v5h-1zM581 133h1v4h-1zM582 133h1v4h-1zM583 131h1v6h-1zM584 133h1v4h-1zM585 130h1v7h-1zM586 132h1v5h-1zM587 133h1v4h-1zM588 131h1v8h-1zM589 133h1v6h-1zM590 132h1v9h-1zM591 133h1v4h-1zM592 131h1v8h-1zM593 133h1v4h-1zM594 132h1v5h-1zM595 133h1v4h-1zM596 133h1v4h-1zM597 131h1v6h-1zM598 133h1v4h-1zM599 131h1v6h-1zM600 133h1v4h-1zM601 133h1v5h-1zM602 133h1v5h-1zM603 133h1v5h-1zM604 131h1v7h-1zM605 131h1v7h-1zM606 132h1v6h-1zM607 133h1v5h-1zM608 133h1v4h-1zM609 133h1v4h-1zM610 133h1v6h-1zM611 133h1v8h-1zM612 133h1v4h-1zM613 131h1v6h-1zM614 133h1v4h-1zM615 133h1v4h-1zM616 133h1v4h-1zM617 133h1v4h-1zM618 133h1v4h-1zM619 133h1v4h-1zM620 133h1v4h-1zM621 133h1v5h-1zM622 131h1v7h-1zM623 133h1v7h-1zM624 131h1v7h-1zM625 133h1v5h-1zM626 133h1v5h-1zM627 133h1v4h-1zM628 131h1v6h-1zM629 133h1v4h-1zM630 133h1v4h-1zM631 133h1v6h-1zM632 133h1v6h-1zM633 131h1v8h-1zM634 133h1v6h-1zM635 133h1v4h-1zM636 133h1v6h-1zM637 133h1v6h-1zM638 133h1v6h-1zM639 132h1v5h-1zM640 133h1v4h-1zM641 133h1v5h-1zM642 133h1v5h-1zM643 133h1v4h-1zM644 133h1v4h-1zM645 131h1v7h-1zM646 133h1v5h-1zM647 133h1v5h-1zM648 131h1v6h-1zM649 133h1v4h-1zM650 132h1v7h-1zM651 133h1v6h-1zM652 131h1v6h-1zM653 132h1v5h-1zM654 133h1v4h-1zM655 133h1v7h-1z" fill="#00f0ff" shape-rendering="crispEdges"/><path d="M16 133h1v7h-1zM17 132h1v7h-1zM18 131h1v7h-1zM19 130h1v7h-1zM20 128h1v7h-1zM21 125h1v7h-1zM22 124h1v7h-1zM23 126h1v7h-1zM24 123h1v7h-1zM25 122h1v7h-1zM26 121h1v7h-1zM27 119h1v8h-1zM28 118h1v7h-1zM29 117h1v7h-1zM30 116h1v7h-1zM31 115h1v7h-1zM32 113h1v7h-1zM33 112h1v7h-1zM34 112h1v7h-1zM35 111h1v7h-1zM36 109h1v7h-1zM37 107h1v7h-1zM38 106h1v7h-1zM39 104h1v8h-1zM40 103h1v7h-1zM41 102h1v7h-1zM42 102h1v7h-1zM43 99h1v8h-1zM44 98h1v7h-1zM45 96h1v8h-1zM46 94h1v7h-1zM47 93h1v7h-1zM48 93h1v7h-1zM49 92h1v7h-1zM50 92h1v9h-1zM51 90h1v7h-1zM52 88h1v7h-1zM53 87h1v7h-1zM54 86h1v7h-1zM55 84h1v7h-1zM56 83h1v6h-1zM57 80h1v8h-1zM58 82h1v7h-1zM59 81h1v7h-1zM60 78h1v7h-1zM61 78h1v6h-1zM62 77h1v7h-1zM63 76h1v7h-1zM64 73h1v7h-1zM65 72h1v7h-1zM66 73h1v7h-1zM67 70h1v6h-1zM68 71h1v6h-1zM69 69h1v7h-1zM70 68h1v7h-1zM71 66h1v7h-1zM72 66h1v16h-1zM73 65h1v7h-1zM74 63h1v7h-1zM75 60h1v8h-1zM76 62h1v6h-1zM77 61h1v6h-1zM78 60h1v6h-1zM79 58h1v6h-1zM80 58h1v6h-1zM81 57h1v6h-1zM82 56h1v6h-1zM83 55h1v6h-1zM84 52h1v6h-1zM85 51h1v6h-1zM86 50h1v6h-1zM87 49h1v6h-1zM88 50h1v6h-1zM89 49h1v6h-1zM90 48h1v7h-1zM91 46h1v6h-1zM92 45h1v6h-1zM93 45h1v6h-1zM94 44h1v6h-1zM95 43h1v6h-1zM96 42h1v5h-1zM97 41h1v6h-1zM98 41h1v6h-1zM99 39h1v6h-1zM100 38h1v6h-1zM101 37h1v6h-1zM102 37h1v5h-1zM103 36h1v5h-1zM104 34h1v6h-1zM105 33h1v6h-1zM106 33h1v5h-1zM107 33h1v5h-1zM108 32h1v6h-1zM109 30h1v6h-1zM110 30h1v5h-1zM111 29h1v5h-1zM112 29h1v5h-1zM113 30h1v5h-1zM114 29h1v5h-1zM115 29h1v5h-1zM116 29h1v4h-1zM117 29h1v3h-1zM118 29h1v3h-1zM119 29h1v2h-1zM120 29h1v2h-1zM194 29h1v1h-1zM195 29h1v1h-1zM196 29h1v2h-1zM197 29h1v2h-1zM198 29h1v3h-1zM199 29h1v3h-1zM200 29h1v5h-1zM201 29h1v6h-1zM202 30h1v6h-1zM203 30h1v6h-1zM204 30h1v5h-1zM205 31h1v5h-1zM206 32h1v6h-1zM207 33h1v5h-1zM208 35h1v5h-1zM209 35h1v6h-1zM210 36h1v6h-1zM211 37h1v6h-1zM212 35h1v5h-1zM213 36h1v5h-1zM214 36h1v6h-1zM215 39h1v6h-1zM216 40h1v6h-1zM217 40h1v6h-1zM218 41h1v6h-1zM219 43h1v5h-1zM220 43h1v6h-1zM221 44h1v6h-1zM222 45h1v6h-1zM223 46h1v6h-1zM224 47h1v6h-1zM225 48h1v9h-1zM226 49h1v6h-1zM227 50h1v6h-1zM228 51h1v6h-1zM229 52h1v6h-1zM230 53h1v6h-1zM231 53h1v6h-1zM232 54h1v6h-1zM233 55h1v6h-1zM234 56h1v6h-1zM235 57h1v6h-1zM236 58h1v6h-1zM237 59h1v6h-1zM238 60h1v7h-1zM239 62h1v7h-1zM240 63h1v7h-1zM241 64h1v7h-1zM242 64h1v8h-1zM243 66h1v7h-1zM244 70h1v6h-1zM245 68h1v6h-1zM246 69h1v6h-1zM247 70h1v7h-1zM248 72h1v9h-1zM249 73h1v7h-1zM250 74h1v7h-1zM251 74h1v8h-1zM252 78h1v6h-1zM253 78h1v8h-1zM254 78h1v7h-1zM255 79h1v7h-1zM256 80h1v7h-1zM257 82h1v6h-1zM258 83h1v7h-1zM259 84h1v7h-1zM260 87h1v7h-1zM261 86h1v7h-1zM262 89h1v7h-1zM263 90h1v7h-1zM264 91h1v7h-1zM265 92h1v7h-1zM266 94h1v7h-1zM267 96h1v7h-1zM268 96h1v7h-1zM269 98h1v8h-1zM270 99h1v8h-1zM271 101h1v7h-1zM272 102h1v7h-1zM273 85h1v32h-1zM274 105h1v8h-1zM275 107h1v7h-1zM276 108h1v7h-1zM277 107h1v7h-1zM278 109h1v7h-1zM279 110h1v7h-1zM280 111h1v7h-1zM281 112h1v7h-1zM282 114h1v7h-1zM283 115h1v7h-1zM284 116h1v7h-1zM285 116h1v7h-1zM286 120h1v7h-1zM287 121h1v7h-1zM288 120h1v7h-1zM289 121h1v7h-1zM290 123h1v7h-1zM291 126h1v7h-1zM292 127h1v7h-1zM293 127h1v7h-1zM294 129h1v7h-1zM295 130h1v7h-1zM296 131h1v7h-1zM297 132h1v7h-1zM298 134h1v7h-1zM299 135h1v7h-1zM300 136h1v7h-1zM301 135h1v7h-1zM302 137h1v7h-1zM303 141h1v7h-1zM304 142h1v7h-1zM305 142h1v7h-1zM306 143h1v7h-1zM307 144h1v7h-1zM308 146h1v9h-1zM309 147h1v7h-1zM310 148h1v7h-1zM311 149h1v7h-1zM312 151h1v6h-1zM313 152h1v7h-1zM314 151h1v7h-1zM315 152h1v7h-1zM316 153h1v7h-1zM317 155h1v7h-1zM318 157h1v6h-1zM319 159h1v6h-1zM320 161h1v6h-1zM321 160h1v7h-1zM322 161h1v7h-1zM323 162h1v7h-1zM324 164h1v7h-1zM325 165h1v7h-1zM326 167h1v6h-1zM327 167h1v6h-1zM328 170h1v6h-1zM329 171h1v6h-1zM330 172h1v6h-1zM331 173h1v6h-1zM332 174h1v6h-1zM333 175h1v6h-1zM334 175h1v6h-1zM335 176h1v6h-1zM336 177h1v6h-1zM337 177h1v6h-1zM338 178h1v6h-1zM339 179h1v6h-1zM340 181h1v6h-1zM341 183h1v6h-1zM342 184h1v6h-1zM343 185h1v6h-1zM344 185h1v5h-1zM345 185h1v6h-1zM346 186h1v6h-1zM347 186h1v6h-1zM348 187h1v6h-1zM349 188h1v6h-1zM350 190h1v5h-1zM351 193h1v5h-1zM352 190h1v6h-1zM353 191h1v6h-1zM354 193h1v6h-1zM355 192h1v7h-1zM356 195h1v5h-1zM357 195h1v6h-1zM358 196h1v6h-1zM359 197h1v5h-1zM360 197h1v5h-1zM361 197h1v6h-1zM362 198h1v5h-1zM363 200h1v5h-1zM364 200h1v6h-1zM365 201h1v5h-1zM366 202h1v5h-1zM367 201h1v5h-1zM368 202h1v5h-1zM369 202h1v5h-1zM370 203h1v5h-1zM371 204h1v5h-1zM372 205h1v5h-1zM373 206h1v5h-1zM374 206h1v5h-1zM375 208h1v5h-1zM376 208h1v5h-1zM377 207h1v5h-1zM378 207h1v5h-1zM379 208h1v4h-1zM380 209h1v5h-1zM381 209h1v5h-1zM382 210h1v4h-1zM383 210h1v5h-1zM384 210h1v4h-1zM385 207h1v8h-1zM386 210h1v5h-1zM387 213h1v4h-1zM388 213h1v4h-1zM389 210h1v8h-1zM390 213h1v5h-1zM391 212h1v6h-1zM392 212h1v4h-1zM393 212h1v5h-1zM394 212h1v5h-1zM395 212h1v4h-1zM396 212h1v4h-1zM397 212h1v4h-1zM398 213h1v4h-1zM399 213h1v5h-1zM400 213h1v5h-1zM401 215h1v5h-1zM402 214h1v5h-1zM403 215h1v4h-1zM404 215h1v4h-1zM405 215h1v4h-1zM406 215h1v4h-1zM407 215h1v4h-1zM408 215h1v4h-1zM409 216h1v5h-1zM410 213h1v5h-1zM411 212h1v6h-1zM412 213h1v5h-1zM413 214h1v5h-1zM414 214h1v5h-1zM415 215h1v4h-1zM416 214h1v4h-1zM417 214h1v4h-1zM418 213h1v5h-1zM419 213h1v6h-1zM420 213h1v5h-1zM421 213h1v4h-1zM422 212h1v4h-1zM423 211h1v5h-1zM424 213h1v5h-1zM425 213h1v4h-1zM426 211h1v5h-1zM427 210h1v5h-1zM428 210h1v4h-1zM429 209h1v5h-1zM430 210h1v5h-1zM431 210h1v4h-1zM432 210h1v5h-1zM433 208h1v5h-1zM434 206h1v5h-1zM435 206h1v5h-1zM436 205h1v6h-1zM437 208h1v5h-1zM438 207h1v5h-1zM439 205h1v5h-1zM440 204h1v5h-1zM441 204h1v5h-1zM442 205h1v5h-1zM443 205h1v5h-1zM444 204h1v5h-1zM445 204h1v5h-1zM446 203h1v5h-1zM447 202h1v6h-1zM448 200h1v5h-1zM449 196h1v8h-1zM450 198h1v6h-1zM451 198h1v5h-1zM452 199h1v5h-1zM453 198h1v6h-1zM454 198h1v5h-1zM455 196h1v5h-1zM456 195h1v6h-1zM457 194h1v6h-1zM458 194h1v5h-1zM459 193h1v5h-1zM460 191h1v7h-1zM461 190h1v6h-1zM462 189h1v6h-1zM463 189h1v6h-1zM464 189h1v5h-1zM465 188h1v6h-1zM466 187h1v6h-1zM467 186h1v6h-1zM468 185h1v6h-1zM469 183h1v6h-1zM470 182h1v6h-1zM471 181h1v6h-1zM472 181h1v19h-1zM473 180h1v18h-1zM474 179h1v7h-1zM475 179h1v6h-1zM476 175h1v9h-1zM477 177h1v6h-1zM478 176h1v6h-1zM479 176h1v6h-1zM480 175h1v6h-1zM481 173h1v7h-1zM482 171h1v7h-1zM483 170h1v7h-1zM484 169h1v7h-1zM485 169h1v7h-1zM486 168h1v7h-1zM487 167h1v7h-1zM488 166h1v6h-1zM489 165h1v6h-1zM490 164h1v6h-1zM491 160h1v9h-1zM492 162h1v6h-1zM493 159h1v7h-1zM494 158h1v7h-1zM495 157h1v10h-1zM496 154h1v9h-1zM497 154h1v7h-1zM498 153h1v6h-1zM499 152h1v7h-1zM500 150h1v7h-1zM501 150h1v7h-1zM502 149h1v7h-1zM503 148h1v7h-1zM504 147h1v6h-1zM505 145h1v7h-1zM506 144h1v7h-1zM507 143h1v7h-1zM508 142h1v7h-1zM509 141h1v6h-1zM510 139h1v7h-1zM511 138h1v7h-1zM512 137h1v7h-1zM513 137h1v7h-1zM514 135h1v7h-1zM515 133h1v7h-1zM516 132h1v7h-1zM517 132h1v10h-1zM518 128h1v7h-1zM519 127h1v7h-1zM520 126h1v7h-1zM521 125h1v7h-1zM522 124h1v7h-1zM523 123h1v7h-1zM524 122h1v7h-1zM525 121h1v7h-1zM526 119h1v7h-1zM527 118h1v7h-1zM528 116h1v7h-1zM529 115h1v7h-1zM530 113h1v7h-1zM531 113h1v7h-1zM532 112h1v7h-1zM533 111h1v7h-1zM534 108h1v7h-1zM535 107h1v7h-1zM536 108h1v7h-1zM537 106h1v8h-1zM538 102h1v10h-1zM539 103h1v7h-1zM540 102h1v7h-1zM541 100h1v8h-1zM542 100h1v7h-1zM543 97h1v7h-1zM544 94h1v9h-1zM545 96h1v7h-1zM546 94h1v7h-1zM547 93h1v7h-1zM548 93h1v7h-1zM549 91h1v7h-1zM550 89h1v7h-1zM551 87h1v7h-1zM552 86h1v7h-1zM553 85h1v7h-1zM554 84h1v6h-1zM555 82h1v7h-1zM556 81h1v7h-1zM557 79h1v8h-1zM558 82h1v7h-1zM559 79h1v6h-1zM560 77h1v7h-1zM561 76h1v7h-1zM562 75h1v7h-1zM563 75h1v7h-1zM564 73h1v6h-1zM565 72h1v6h-1zM566 70h1v6h-1zM567 68h1v7h-1zM568 69h1v7h-1zM569 68h1v7h-1zM570 66h1v7h-1zM571 65h1v7h-1zM572 64h1v6h-1zM573 61h1v9h-1zM574 62h1v6h-1zM575 61h1v6h-1zM576 60h1v6h-1zM577 60h1v6h-1zM578 58h1v7h-1zM579 56h1v7h-1zM580 56h1v7h-1zM581 54h1v7h-1zM582 53h1v7h-1zM583 51h1v7h-1zM584 52h1v7h-1zM585 51h1v7h-1zM586 50h1v6h-1zM587 49h1v6h-1zM588 48h1v6h-1zM589 49h1v6h-1zM590 48h1v6h-1zM591 44h1v6h-1zM592 43h1v6h-1zM593 42h1v6h-1zM594 42h1v6h-1zM595 40h1v6h-1zM596 41h1v5h-1zM597 40h1v5h-1zM598 41h1v6h-1zM599 40h1v6h-1zM600 39h1v6h-1zM601 36h1v6h-1zM602 37h1v5h-1zM603 36h1v5h-1zM604 34h1v6h-1zM605 33h1v6h-1zM606 33h1v5h-1zM607 32h1v5h-1zM608 31h1v6h-1zM609 31h1v5h-1zM610 29h1v5h-1zM611 29h1v5h-1zM612 29h1v4h-1zM613 29h1v4h-1zM614 29h1v4h-1zM615 29h1v3h-1zM616 29h1v2h-1zM617 29h1v1h-1z" fill="#ffff00" shape-rendering="crispEdges"/><path d="M16 130h1v7h-1zM17 128h1v8h-1zM18 127h1v7h-1zM19 128h1v7h-1zM20 127h1v7h-1zM21 124h1v7h-1zM22 123h1v7h-1zM23 119h1v10h-1zM24 120h1v8h-1zM25 120h1v7h-1zM26 119h1v7h-1zM27 117h1v8h-1zM28 114h1v7h-1zM29 113h1v7h-1zM30 115h1v7h-1zM31 110h1v11h-1zM32 112h1v7h-1zM33 110h1v7h-1zM34 107h1v8h-1zM35 106h1v7h-1zM36 105h1v8h-1zM37 104h1v10h-1zM38 102h1v7h-1zM39 100h1v8h-1zM40 101h1v7h-1zM41 99h1v8h-1zM42 96h1v7h-1zM43 95h1v7h-1zM44 94h1v7h-1zM45 93h1v7h-1zM46 92h1v7h-1zM47 91h1v7h-1zM48 87h1v8h-1zM49 86h1v7h-1zM50 88h1v7h-1zM51 87h1v7h-1zM52 85h1v7h-1zM53 82h1v7h-1zM54 81h1v7h-1zM55 80h1v7h-1zM56 78h1v7h-1zM57 77h1v7h-1zM58 75h1v7h-1zM59 74h1v7h-1zM60 70h1v9h-1zM61 73h1v7h-1zM62 72h1v7h-1zM63 72h1v7h-1zM64 71h1v7h-1zM65 70h1v6h-1zM66 68h1v7h-1zM67 65h1v7h-1zM68 64h1v7h-1zM69 63h1v7h-1zM70 62h1v6h-1zM71 61h1v6h-1zM72 58h1v7h-1zM73 57h1v7h-1zM74 56h1v7h-1zM75 57h1v8h-1zM76 57h1v7h-1zM77 56h1v6h-1zM78 54h1v6h-1zM79 53h1v6h-1zM80 53h1v6h-1zM81 52h1v6h-1zM82 51h1v6h-1zM83 48h1v9h-1zM84 49h1v6h-1zM85 48h1v6h-1zM86 45h1v6h-1zM87 46h1v6h-1zM88 45h1v6h-1zM89 44h1v6h-1zM90 43h1v6h-1zM91 41h1v6h-1zM92 41h1v6h-1zM93 35h1v8h-1zM94 36h1v6h-1zM95 35h1v6h-1zM96 35h1v6h-1zM97 34h1v6h-1zM98 35h1v6h-1zM99 35h1v5h-1zM100 34h1v6h-1zM101 32h1v8h-1zM102 31h1v6h-1zM103 29h1v6h-1zM104 29h1v5h-1zM105 29h1v4h-1zM106 29h1v4h-1zM107 29h1v7h-1zM108 29h1v3h-1zM109 29h1v2h-1zM110 29h1v1h-1zM111 29h1v2h-1zM112 29h1v1h-1zM203 29h1v2h-1zM204 29h1v3h-1zM205 29h1v3h-1zM206 29h1v3h-1zM207 29h1v4h-1zM208 29h1v5h-1zM209 30h1v5h-1zM210 31h1v5h-1zM211 31h1v6h-1zM212 31h1v6h-1zM213 32h1v6h-1zM214 33h1v6h-1zM215 34h1v6h-1zM216 36h1v5h-1zM217 36h1v6h-1zM218 37h1v6h-1zM219 38h1v6h-1zM220 40h1v6h-1zM221 38h1v6h-1zM222 40h1v6h-1zM223 41h1v6h-1zM224 43h1v6h-1zM225 44h1v6h-1zM226 45h1v6h-1zM227 45h1v7h-1zM228 47h1v6h-1zM229 47h1v6h-1zM230 48h1v6h-1zM231 48h1v6h-1zM232 49h1v6h-1zM233 50h1v6h-1zM234 52h1v6h-1zM235 51h1v6h-1zM236 52h1v7h-1zM237 54h1v7h-1zM238 55h1v7h-1zM239 56h1v7h-1zM240 57h1v7h-1zM241 59h1v6h-1zM242 60h1v6h-1zM243 62h1v6h-1zM244 63h1v7h-1zM245 64h1v7h-1zM246 66h1v7h-1zM247 66h1v7h-1zM248 68h1v6h-1zM249 68h1v7h-1zM250 70h1v7h-1zM251 71h1v7h-1zM252 72h1v7h-1zM253 75h1v6h-1zM254 76h1v7h-1zM255 77h1v7h-1zM256 76h1v7h-1zM257 77h1v7h-1zM258 80h1v7h-1zM259 81h1v7h-1zM260 82h1v7h-1zM261 82h1v7h-1zM262 84h1v7h-1zM263 85h1v7h-1zM264 84h1v10h-1zM265 87h1v7h-1zM266 90h1v7h-1zM267 91h1v7h-1zM268 93h1v7h-1zM269 94h1v8h-1zM270 96h1v9h-1zM271 96h1v7h-1zM272 97h1v7h-1zM273 99h1v7h-1zM274 98h1v7h-1zM275 99h1v7h-1zM276 100h1v8h-1zM277 104h1v7h-1zM278 104h1v7h-1zM279 105h1v8h-1zM280 108h1v7h-1zM281 109h1v7h-1zM282 110h1v7h-1zM283 110h1v8h-1zM284 112h1v7h-1zM285 114h1v7h-1zM286 115h1v8h-1zM287 117h1v7h-1zM288 119h1v7h-1zM289 120h1v7h-1zM290 121h1v8h-1zM291 121h1v7h-1zM292 122h1v7h-1zM293 123h1v11h-1zM294 126h1v7h-1zM295 127h1v7h-1zM296 128h1v7h-1zM297 128h1v8h-1zM298 130h1v7h-1zM299 131h1v7h-1zM300 134h1v7h-1zM301 135h1v7h-1zM302 136h1v7h-1zM303 138h1v7h-1zM304 138h1v7h-1zM305 140h1v7h-1zM306 141h1v7h-1zM307 142h1v7h-1zM308 143h1v7h-1zM309 145h1v7h-1zM310 146h1v7h-1zM311 146h1v7h-1zM312 146h1v9h-1zM313 151h1v6h-1zM314 152h1v7h-1zM315 152h1v7h-1zM316 153h1v7h-1zM317 154h1v7h-1zM318 156h1v6h-1zM319 157h1v6h-1zM320 158h1v7h-1zM321 158h1v7h-1zM322 159h1v7h-1zM323 160h1v7h-1zM324 163h1v7h-1zM325 165h1v6h-1zM326 165h1v6h-1zM327 166h1v6h-1zM328 166h1v6h-1zM329 168h1v6h-1zM330 169h1v6h-1zM331 171h1v7h-1zM332 172h1v7h-1zM333 170h1v10h-1zM334 173h1v7h-1zM335 174h1v7h-1zM336 175h1v7h-1zM337 175h1v7h-1zM338 175h1v11h-1zM339 178h1v7h-1zM340 179h1v6h-1zM341 182h1v6h-1zM342 181h1v6h-1zM343 179h1v8h-1zM344 182h1v6h-1zM345 183h1v6h-1zM346 184h1v6h-1zM347 185h1v6h-1zM348 186h1v6h-1zM349 187h1v6h-1zM350 189h1v5h-1zM351 189h1v6h-1zM352 190h1v6h-1zM353 191h1v6h-1zM354 192h1v6h-1zM355 193h1v5h-1zM356 194h1v5h-1zM357 193h1v6h-1zM358 194h1v6h-1zM359 195h1v5h-1zM360 193h1v10h-1zM361 197h1v9h-1zM362 199h1v5h-1zM363 200h1v5h-1zM364 200h1v6h-1zM365 201h1v5h-1zM366 201h1v5h-1zM367 201h1v6h-1zM368 202h1v5h-1zM369 203h1v5h-1zM370 202h1v5h-1zM371 203h1v5h-1zM372 204h1v5h-1zM373 205h1v5h-1zM374 206h1v5h-1zM375 207h1v5h-1zM376 207h1v5h-1zM377 207h1v5h-1zM378 207h1v5h-1zM379 208h1v5h-1zM380 206h1v8h-1zM381 210h1v6h-1zM382 210h1v5h-1zM383 209h1v4h-1zM384 209h1v5h-1zM385 209h1v5h-1zM386 212h1v4h-1zM387 212h1v5h-1zM388 212h1v5h-1zM389 213h1v5h-1zM390 213h1v4h-1zM391 212h1v5h-1zM392 212h1v5h-1zM393 213h1v4h-1zM394 213h1v4h-1zM395 213h1v5h-1zM396 214h1v5h-1zM397 213h1v5h-1zM398 214h1v4h-1zM399 214h1v4h-1zM400 215h1v4h-1zM401 215h1v4h-1zM402 215h1v4h-1zM403 215h1v4h-1zM404 213h1v4h-1zM405 213h1v5h-1zM406 214h1v5h-1zM407 214h1v5h-1zM408 214h1v5h-1zM409 214h1v4h-1zM410 214h1v4h-1zM411 214h1v4h-1zM412 215h1v4h-1zM413 215h1v4h-1zM414 214h1v4h-1zM415 213h1v5h-1zM416 213h1v5h-1zM417 213h1v5h-1zM418 213h1v4h-1zM419 213h1v4h-1zM420 213h1v4h-1zM421 212h1v5h-1zM422 212h1v5h-1zM423 212h1v4h-1zM424 211h1v7h-1zM425 211h1v5h-1zM426 211h1v4h-1zM427 212h1v6h-1zM428 211h1v5h-1zM429 211h1v4h-1zM430 208h1v7h-1zM431 210h1v5h-1zM432 206h1v7h-1zM433 208h1v5h-1zM434 209h1v5h-1zM435 208h1v5h-1zM436 208h1v5h-1zM437 206h1v5h-1zM438 206h1v5h-1zM439 205h1v5h-1zM440 204h1v5h-1zM441 203h1v5h-1zM442 203h1v5h-1zM443 202h1v5h-1zM444 201h1v5h-1zM445 203h1v5h-1zM446 202h1v6h-1zM447 201h1v6h-1zM448 200h1v5h-1zM449 199h1v5h-1zM450 198h1v6h-1zM451 199h1v5h-1zM452 198h1v5h-1zM453 197h1v7h-1zM454 197h1v5h-1zM455 195h1v5h-1zM456 194h1v6h-1zM457 192h1v6h-1zM458 191h1v9h-1zM459 191h1v5h-1zM460 190h1v5h-1zM461 190h1v6h-1zM462 189h1v6h-1zM463 188h1v6h-1zM464 188h1v6h-1zM465 187h1v6h-1zM466 184h1v5h-1zM467 183h1v6h-1zM468 184h1v6h-1zM469 184h1v6h-1zM470 183h1v6h-1zM471 181h1v6h-1zM472 181h1v6h-1zM473 180h1v6h-1zM474 179h1v6h-1zM475 177h1v6h-1zM476 176h1v6h-1zM477 174h1v6h-1zM478 173h1v6h-1zM479 173h1v6h-1zM480 172h1v6h-1zM481 171h1v6h-1zM482 171h1v6h-1zM483 170h1v6h-1zM484 169h1v6h-1zM485 166h1v7h-1zM486 165h1v7h-1zM487 164h1v7h-1zM488 164h1v7h-1zM489 162h1v7h-1zM490 162h1v6h-1zM491 161h1v6h-1zM492 160h1v6h-1zM493 157h1v7h-1zM494 156h1v7h-1zM495 155h1v7h-1zM496 154h1v7h-1zM497 153h1v6h-1zM498 151h1v7h-1zM499 149h1v9h-1zM500 149h1v7h-1zM501 146h1v9h-1zM502 146h1v7h-1zM503 144h1v7h-1zM504 143h1v7h-1zM505 143h1v7h-1zM506 142h1v7h-1zM507 140h1v7h-1zM508 139h1v7h-1zM509 138h1v7h-1zM510 136h1v7h-1zM511 136h1v8h-1zM512 135h1v7h-1zM513 134h1v7h-1zM514 132h1v7h-1zM515 130h1v7h-1zM516 129h1v7h-1zM517 128h1v7h-1zM518 128h1v7h-1zM519 126h1v7h-1zM520 122h1v7h-1zM521 121h1v7h-1zM522 119h1v8h-1zM523 119h1v7h-1zM524 118h1v7h-1zM525 118h1v8h-1zM526 117h1v7h-1zM527 114h1v7h-1zM528 113h1v8h-1zM529 111h1v7h-1zM530 111h1v8h-1zM531 109h1v7h-1zM532 107h1v8h-1zM533 106h1v7h-1zM534 107h1v7h-1zM535 103h1v8h-1zM536 102h1v7h-1zM537 101h1v7h-1zM538 101h1v7h-1zM539 100h1v8h-1zM540 98h1v8h-1zM541 96h1v7h-1zM542 94h1v8h-1zM543 93h1v7h-1zM544 92h1v7h-1zM545 92h1v7h-1zM546 90h1v7h-1zM547 89h1v7h-1zM548 89h1v7h-1zM549 85h1v10h-1zM550 85h1v7h-1zM551 81h1v10h-1zM552 83h1v7h-1zM553 82h1v7h-1zM554 81h1v7h-1zM555 80h1v7h-1zM556 79h1v7h-1zM557 77h1v7h-1zM558 75h1v7h-1zM559 74h1v10h-1zM560 73h1v7h-1zM561 72h1v7h-1zM562 70h1v7h-1zM563 68h1v7h-1zM564 67h1v7h-1zM565 68h1v7h-1zM566 64h1v9h-1zM567 64h1v7h-1zM568 63h1v6h-1zM569 61h1v7h-1zM570 62h1v7h-1zM571 61h1v7h-1zM572 60h1v7h-1zM573 58h1v7h-1zM574 57h1v6h-1zM575 54h1v9h-1zM576 56h1v6h-1zM577 55h1v6h-1zM578 54h1v6h-1zM579 52h1v7h-1zM580 50h1v7h-1zM581 49h1v7h-1zM582 49h1v7h-1zM583 48h1v7h-1zM584 46h1v7h-1zM585 45h1v7h-1zM586 44h1v7h-1zM587 44h1v7h-1zM588 42h1v7h-1zM589 41h1v9h-1zM590 41h1v6h-1zM591 39h1v6h-1zM592 38h1v6h-1zM593 38h1v6h-1zM594 37h1v6h-1zM595 36h1v6h-1zM596 35h1v6h-1zM597 34h1v6h-1zM598 32h1v6h-1zM599 32h1v5h-1zM600 32h1v5h-1zM601 31h1v6h-1zM602 30h1v6h-1zM603 29h1v6h-1zM604 29h1v5h-1zM605 29h1v4h-1zM606 29h1v5h-1zM607 29h1v4h-1zM608 29h1v3h-1z" fill="#ff2000" shape-rendering="crispEdges"/><path d="M16 149h1v6h-1zM17 149h1v7h-1zM18 149h1v7h-1zM19 147h1v9h-1zM20 149h1v7h-1zM21 149h1v7h-1zM22 149h1v7h-1zM23 149h1v7h-1zM24 147h1v10h-1zM25 147h1v10h-1zM26 147h1v10h-1zM27 149h1v8h-1zM28 149h1v6h-1zM29 149h1v6h-1zM30 149h1v7h-1zM31 149h1v9h-1zM32 147h1v11h-1zM33 147h1v9h-1zM34 147h1v8h-1zM35 149h1v6h-1zM36 147h1v8h-1zM37 147h1v8h-1zM38 149h1v6h-1zM39 149h1v6h-1zM40 149h1v8h-1zM41 147h1v8h-1zM42 149h1v6h-1zM43 147h1v8h-1zM44 149h1v6h-1zM45 149h1v6h-1zM46 149h1v6h-1zM47 149h1v8h-1zM48 149h1v6h-1zM49 149h1v6h-1zM50 149h1v6h-1zM51 149h1v6h-1zM52 147h1v9h-1zM53 147h1v11h-1zM54 147h1v9h-1zM55 149h1v7h-1zM56 149h1v9h-1zM57 147h1v9h-1zM58 147h1v9h-1zM59 149h1v7h-1zM60 147h1v9h-1zM61 149h1v7h-1zM62 149h1v7h-1zM63 149h1v6h-1zM64 149h1v6h-1zM65 149h1v8h-1zM66 147h1v8h-1zM67 149h1v6h-1zM68 149h1v6h-1zM69 149h1v6h-1zM70 149h1v6h-1zM71 149h1v6h-1zM72 149h1v6h-1zM73 147h1v8h-1zM74 149h1v6h-1zM75 147h1v8h-1zM76 149h1v6h-1zM77 147h1v8h-1zM78 149h1v6h-1zM79 149h1v6h-1zM80 149h1v8h-1zM81 149h1v7h-1zM82 149h1v7h-1zM83 149h1v6h-1zM84 149h1v9h-1zM85 149h1v7h-1zM86 149h1v7h-1zM87 147h1v8h-1zM88 149h1v6h-1zM89 149h1v8h-1zM90 149h1v6h-1zM91 149h1v6h-1zM92 149h1v6h-1zM93 147h1v8h-1zM94 149h1v6h-1zM95 149h1v6h-1zM96 149h1v6h-1zM97 147h1v8h-1zM98 149h1v6h-1zM99 149h1v6h-1zM100 147h1v8h-1zM101 147h1v11h-1zM102 147h1v10h-1zM103 149h1v7h-1zM104 149h1v7h-1zM105 149h1v7h-1zM106 149h1v7h-1zM107 149h1v7h-1zM108 149h1v7h-1zM109 149h1v7h-1zM110 149h1v6h-1zM111 147h1v8h-1zM112 149h1v6h-1zM113 147h1v8h-1zM114 149h1v6h-1zM115 149h1v6h-1zM116 149h1v7h-1zM117 149h1v7h-1zM118 149h1v6h-1zM119 149h1v6h-1zM120 149h1v6h-1zM121 149h1v6h-1zM122 149h1v6h-1zM123 149h1v6h-1zM124 149h1v6h-1zM125 149h1v6h-1zM126 149h1v6h-1zM127 147h1v9h-1zM128 149h1v9h-1zM129 147h1v8h-1zM130 149h1v7h-1zM131 149h1v7h-1zM132 146h1v9h-1zM133 149h1v6h-1zM134 149h1v6h-1zM135 149h1v6h-1zM136 149h1v8h-1zM137 149h1v8h-1zM138 147h1v12h-1zM139 149h1v6h-1zM140 149h1v6h-1zM141 149h1v6h-1zM142 148h1v7h-1zM143 149h1v7h-1zM144 149h1v7h-1zM145 149h1v7h-1zM146 149h1v7h-1zM147 149h1v7h-1zM148 149h1v6h-1zM149 149h1v6h-1zM150 149h1v6h-1zM151 149h1v6h-1zM152 149h1v6h-1zM153 149h1v7h-1zM154 149h1v6h-1zM155 149h1v6h-1zM156 149h1v6h-1zM157 149h1v6h-1zM158 149h1v6h-1zM159 148h1v7h-1zM160 149h1v6h-1zM161 149h1v6h-1zM162 148h1v9h-1zM163 147h1v10h-1zM164 149h1v7h-1zM165 149h1v6h-1zM166 147h1v9h-1zM167 149h1v7h-1zM168 149h1v7h-1zM169 149h1v7h-1zM170 149h1v8h-1zM171 149h1v10h-1zM172 149h1v10h-1zM173 149h1v8h-1zM174 149h1v8h-1zM175 149h1v6h-1zM176 149h1v6h-1zM177 149h1v6h-1zM178 149h1v6h-1zM179 147h1v10h-1zM180 149h1v6h-1zM181 149h1v8h-1zM182 149h1v7h-1zM183 149h1v9h-1zM184 149h1v7h-1zM185 147h1v9h-1zM186 147h1v8h-1zM187 147h1v9h-1zM188 149h1v7h-1zM189 147h1v9h-1zM190 149h1v7h-1zM191 149h1v7h-1zM192 149h1v7h-1zM193 149h1v6h-1zM194 149h1v6h-1zM195 149h1v7h-1zM196 149h1v7h-1zM197 149h1v6h-1zM198 149h1v9h-1zM199 149h1v9h-1zM200 149h1v7h-1zM201 147h1v8h-1zM202 149h1v7h-1zM203 149h1v7h-1zM204 149h1v8h-1zM205 149h1v6h-1zM206 149h1v6h-1zM207 147h1v8h-1zM208 149h1v8h-1zM209 149h1v6h-1zM210 149h1v6h-1zM211 149h1v6h-1zM212 149h1v6h-1zM213 149h1v6h-1zM214 149h1v6h-1zM215 149h1v6h-1zM216 149h1v6h-1zM217 149h1v6h-1zM218 149h1v8h-1zM219 149h1v6h-1zM220 149h1v6h-1zM221 149h1v6h-1zM222 149h1v6h-1zM223 149h1v6h-1zM224 147h1v8h-1zM225 149h1v6h-1zM226 149h1v7h-1zM227 147h1v9h-1zM228 149h1v7h-1zM229 149h1v9h-1zM230 149h1v6h-1zM231 149h1v8h-1zM232 149h1v7h-1zM233 149h1v7h-1zM234 149h1v6h-1zM235 149h1v6h-1zM236 149h1v6h-1zM237 149h1v6h-1zM238 147h1v8h-1zM239 149h1v6h-1zM240 147h1v10h-1zM241 149h1v6h-1zM242 149h1v8h-1zM243 149h1v8h-1zM244 147h1v11h-1zM245 149h1v6h-1zM246 147h1v8h-1zM247 149h1v8h-1zM248 149h1v6h-1zM249 149h1v8h-1zM250 149h1v6h-1zM251 149h1v7h-1zM252 147h1v8h-1zM253 149h1v8h-1zM254 149h1v6h-1zM255 149h1v6h-1zM256 149h1v8h-1zM257 147h1v8h-1zM258 149h1v6h-1zM259 149h1v6h-1zM260 149h1v8h-1zM261 149h1v8h-1zM262 149h1v6h-1zM263 149h1v7h-1zM264 149h1v7h-1zM265 149h1v6h-1zM266 149h1v6h-1zM267 149h1v6h-1zM268 149h1v6h-1zM269 149h1v8h-1zM270 149h1v7h-1zM271 149h1v8h-1zM272 149h1v10h-1zM273 149h1v8h-1zM274 149h1v8h-1zM275 149h1v7h-1zM276 149h1v7h-1zM277 149h1v7h-1zM278 149h1v9h-1zM279 149h1v7h-1zM280 147h1v11h-1zM281 149h1v7h-1zM282 149h1v7h-1zM283 149h1v9h-1zM284 149h1v9h-1zM285 147h1v9h-1zM286 149h1v7h-1zM287 149h1v6h-1zM288 149h1v6h-1zM289 149h1v6h-1zM290 149h1v8h-1zM291 149h1v8h-1zM292 147h1v8h-1zM293 149h1v7h-1zM294 149h1v7h-1zM295 149h1v7h-1zM296 149h1v7h-1zM297 149h1v6h-1zM298 147h1v8h-1zM299 149h1v7h-1zM300 149h1v7h-1zM301 149h1v7h-1zM302 149h1v9h-1zM303 149h1v6h-1zM304 147h1v8h-1zM305 149h1v6h-1zM306 149h1v6h-1zM307 149h1v6h-1zM308 149h1v6h-1zM309 149h1v7h-1zM310 149h1v6h-1zM311 149h1v6h-1zM312 149h1v8h-1zM313 149h1v8h-1zM314 147h1v9h-1zM315 147h1v9h-1zM316 149h1v7h-1zM317 147h1v9h-1zM318 149h1v7h-1zM319 149h1v7h-1zM320 148h1v10h-1zM321 149h1v9h-1zM322 149h1v6h-1zM323 147h1v11h-1zM324 149h1v7h-1zM325 147h1v9h-1zM326 149h1v6h-1zM327 149h1v8h-1zM328 147h1v8h-1zM329 147h1v8h-1zM330 149h1v6h-1zM331 149h1v6h-1zM332 149h1v8h-1zM333 149h1v6h-1zM334 149h1v9h-1zM335 149h1v9h-1zM336 149h1v7h-1zM337 149h1v6h-1zM338 149h1v6h-1zM339 147h1v9h-1zM340 149h1v7h-1zM341 147h1v9h-1zM342 149h1v7h-1zM343 147h1v9h-1zM344 149h1v9h-1zM345 149h1v6h-1zM346 149h1v6h-1zM347 149h1v6h-1zM348 147h1v9h-1zM349 149h1v8h-1zM350 149h1v7h-1zM351 149h1v7h-1zM352 149h1v7h-1zM353 149h1v9h-1zM354 149h1v7h-1zM355 149h1v6h-1zM356 149h1v6h-1zM357 147h1v8h-1zM358 149h1v7h-1zM359 149h1v7h-1zM360 149h1v6h-1zM361 149h1v8h-1zM362 146h1v12h-1zM363 147h1v9h-1zM364 149h1v7h-1zM365 149h1v7h-1zM366 149h1v7h-1zM367 149h1v8h-1zM368 149h1v6h-1zM369 149h1v7h-1zM370 149h1v7h-1zM371 149h1v9h-1zM372 149h1v7h-1zM373 149h1v7h-1zM374 149h1v6h-1zM375 148h1v7h-1zM376 149h1v6h-1zM377 149h1v6h-1zM378 149h1v7h-1zM379 147h1v8h-1zM380 149h1v6h-1zM381 147h1v8h-1zM382 149h1v9h-1zM383 147h1v11h-1zM384 149h1v6h-1zM385 149h1v6h-1zM386 149h1v6h-1zM387 149h1v7h-1zM388 149h1v8h-1zM389 149h1v6h-1zM390 149h1v6h-1zM391 149h1v6h-1zM392 149h1v6h-1zM393 149h1v7h-1zM394 149h1v6h-1zM395 149h1v8h-1zM396 149h1v7h-1zM397 149h1v8h-1zM398 149h1v6h-1zM399 149h1v7h-1zM400 149h1v7h-1zM401 149h1v7h-1zM402 149h1v7h-1zM403 149h1v7h-1zM404 149h1v6h-1zM405 149h1v7h-1zM406 149h1v7h-1zM407 149h1v8h-1zM408 147h1v8h-1zM409 149h1v6h-1zM410 149h1v6h-1zM411 147h1v9h-1zM412 149h1v9h-1zM413 149h1v7h-1zM414 149h1v9h-1zM415 149h1v7h-1zM416 149h1v6h-1zM417 149h1v6h-1zM418 149h1v8h-1zM419 149h1v7h-1zM420 149h1v7h-1zM421 149h1v6h-1zM422 147h1v8h-1zM423 149h1v6h-1zM424 149h1v6h-1zM425 147h1v10h-1zM426 149h1v6h-1zM427 149h1v6h-1zM428 149h1v6h-1zM429 149h1v6h-1zM430 149h1v6h-1zM431 149h1v9h-1zM432 149h1v7h-1zM433 149h1v6h-1zM434 149h1v7h-1zM435 149h1v7h-1zM436 149h1v7h-1zM437 149h1v7h-1zM438 149h1v6h-1zM439 147h1v8h-1zM440 149h1v6h-1zM441 149h1v7h-1zM442 149h1v7h-1zM443 147h1v9h-1zM444 147h1v8h-1zM445 149h1v6h-1zM446 149h1v6h-1zM447 147h1v8h-1zM448 148h1v7h-1zM449 149h1v7h-1zM450 149h1v9h-1zM451 149h1v7h-1zM452 149h1v7h-1zM453 149h1v9h-1zM454 149h1v6h-1zM455 149h1v6h-1zM456 149h1v6h-1zM457 147h1v8h-1zM458 149h1v6h-1zM459 149h1v6h-1zM460 147h1v8h-1zM461 149h1v8h-1zM462 149h1v6h-1zM463 149h1v6h-1zM464 149h1v7h-1zM465 147h1v9h-1zM466 149h1v7h-1zM467 149h1v7h-1zM468 149h1v7h-1zM469 147h1v9h-1zM470 149h1v7h-1zM471 147h1v11h-1zM472 147h1v9h-1zM473 149h1v6h-1zM474 149h1v8h-1zM475 146h1v9h-1zM476 149h1v8h-1zM477 149h1v6h-1zM478 147h1v8h-1zM479 148h1v8h-1zM480 147h1v11h-1zM481 149h1v8h-1zM482 149h1v6h-1zM483 147h1v8h-1zM484 149h1v7h-1zM485 149h1v7h-1zM486 149h1v7h-1zM487 149h1v6h-1zM488 149h1v7h-1zM489 147h1v9h-1zM490 149h1v8h-1zM491 149h1v7h-1zM492 149h1v6h-1zM493 149h1v6h-1zM494 149h1v6h-1zM495 149h1v6h-1zM496 149h1v6h-1zM497 149h1v6h-1zM498 149h1v6h-1zM499 148h1v9h-1zM500 149h1v8h-1zM501 149h1v6h-1zM502 147h1v9h-1zM503 149h1v7h-1zM504 149h1v6h-1zM505 149h1v9h-1zM506 149h1v7h-1zM507 149h1v7h-1zM508 149h1v7h-1zM509 147h1v8h-1zM510 149h1v7h-1zM511 149h1v9h-1zM512 149h1v9h-1zM513 149h1v7h-1zM514 149h1v7h-1zM515 149h1v7h-1zM516 147h1v9h-1zM517 149h1v7h-1zM518 149h1v7h-1zM519 149h1v7h-1zM520 149h1v7h-1zM521 149h1v6h-1zM522 149h1v6h-1zM523 149h1v9h-1zM524 149h1v7h-1zM525 149h1v7h-1zM526 149h1v7h-1zM527 149h1v7h-1zM528 147h1v8h-1zM529 147h1v8h-1zM530 149h1v6h-1zM531 149h1v6h-1zM532 149h1v6h-1zM533 149h1v6h-1zM534 149h1v6h-1zM535 149h1v7h-1zM536 147h1v9h-1zM537 149h1v7h-1zM538 149h1v6h-1zM539 149h1v7h-1zM540 147h1v9h-1zM541 149h1v6h-1zM542 149h1v8h-1zM543 147h1v10h-1zM544 147h1v10h-1zM545 149h1v6h-1zM546 148h1v7h-1zM547 149h1v6h-1zM548 149h1v6h-1zM549 149h1v8h-1zM550 149h1v6h-1zM551 149h1v8h-1zM552 148h1v7h-1zM553 147h1v8h-1zM554 149h1v6h-1zM555 149h1v6h-1zM556 149h1v6h-1zM557 149h1v6h-1zM558 149h1v6h-1zM559 149h1v6h-1zM560 149h1v8h-1zM561 149h1v7h-1zM562 149h1v7h-1zM563 149h1v6h-1zM564 149h1v8h-1zM565 147h1v8h-1zM566 147h1v8h-1zM567 147h1v8h-1zM568 147h1v8h-1zM569 149h1v6h-1zM570 149h1v8h-1zM571 147h1v10h-1zM572 149h1v6h-1zM573 149h1v6h-1zM574 147h1v8h-1zM575 149h1v6h-1zM576 149h1v8h-1zM577 149h1v6h-1zM578 149h1v6h-1zM579 149h1v6h-1zM580 149h1v6h-1zM581 149h1v6h-1zM582 149h1v8h-1zM583 149h1v6h-1zM584 149h1v6h-1zM585 149h1v6h-1zM586 149h1v6h-1zM587 149h1v6h-1zM588 149h1v8h-1zM589 149h1v6h-1zM590 149h1v6h-1zM591 149h1v6h-1zM592 149h1v6h-1zM593 148h1v7h-1zM594 149h1v6h-1zM595 149h1v9h-1zM596 149h1v7h-1zM597 147h1v11h-1zM598 149h1v9h-1zM599 149h1v9h-1zM600 149h1v7h-1zM601 147h1v10h-1zM602 147h1v11h-1zM603 149h1v10h-1zM604 149h1v6h-1zM605 149h1v6h-1zM606 149h1v8h-1zM607 148h1v7h-1zM608 149h1v6h-1zM609 149h1v6h-1zM610 149h1v8h-1zM611 149h1v6h-1zM612 149h1v8h-1zM613 149h1v6h-1zM614 149h1v6h-1zM615 149h1v6h-1zM616 149h1v6h-1zM617 147h1v8h-1zM618 149h1v6h-1zM619 149h1v6h-1zM620 149h1v6h-1zM621 149h1v7h-1zM622 149h1v9h-1zM623 149h1v7h-1zM624 149h1v7h-1zM625 149h1v8h-1zM626 149h1v8h-1zM627 149h1v6h-1zM628 149h1v6h-1zM629 149h1v8h-1zM630 147h1v8h-1zM631 149h1v6h-1zM632 149h1v6h-1zM633 149h1v6h-1zM634 147h1v8h-1zM635 149h1v6h-1zM636 149h1v6h-1zM637 149h1v6h-1zM638 149h1v6h-1zM639 148h1v7h-1zM640 149h1v7h-1zM641 149h1v7h-1zM642 149h1v7h-1zM643 149h1v6h-1z" fill="#00ff00" shape-rendering="crispEdges"/><path d="M313 133h1v97h-1zM503 133h1v97h-1z" fill="#00f0ff" shape-rendering="crispEdges"/><path d="M643 152.5L656 144.5V160.5Z" fill="#ffff00"/><path d="M0 233H9L15 239L9 247H0Z" fill="#ff2000"/><path d="M0 232H9L15.5 238.5L9 245H0Z" fill="#00ff00"/><text x="1.5" y="244" font-size="13" fill="#3333ff" text-anchor="start" font-weight="bold" >4</text><path d="M300 29H370V41.5L367 44.5H341.5L335.5 51.5L329.5 44.5H303L300 41.5Z" fill="#4c7cf0" stroke="#9cc4ff" stroke-width="0.6"/><text x="335.5" y="43" font-size="16" fill="#ffffff" text-anchor="middle" textLength="52.27" lengthAdjust="spacing" transform="translate(335.5 0) scale(0.88 1) translate(-335.5 0)" stroke="#4c7cf0" stroke-width="0.25">0.000s</text><path d="M17 7h3v14h-3zM25 7h3v14h-3zM20 12h5v3h-5zM31 10h12v2h-12zM31 12h4v1h-4zM40 12h3v9h-3zM31 14h12v3h-12zM31 17h4v3h-4zM31 20h12v1h-12zM43 18h3v3h-3zM46 10h3v11h-3zM46 10h10v2h-10zM54 11h3v10h-3zM60 7h3v14h-3zM63 10h5v2h-5zM63 18h5v3h-5zM69 10h12v3h-12zM69 13h3v8h-3zM78 13h3v1h-3zM69 14h12v3h-12zM69 18h18v3h-18zM84 7h3v14h-3zM87 13L91.8 10H94.5V10.6L88.2 15.6L87 16Z M87 14.2L88.6 14.2L94.5 19.6V21H91.8L87 17Z" fill="none" stroke="#2c2f5c" stroke-width="0.8" stroke-linejoin="round"/><path d="M17 7h3v14h-3zM25 7h3v14h-3zM20 12h5v3h-5zM31 10h12v2h-12zM31 12h4v1h-4zM40 12h3v9h-3zM31 14h12v3h-12zM31 17h4v3h-4zM31 20h12v1h-12zM43 18h3v3h-3zM46 10h3v11h-3zM46 10h10v2h-10zM54 11h3v10h-3zM60 7h3v14h-3zM63 10h5v2h-5zM63 18h5v3h-5zM69 10h12v3h-12zM69 13h3v8h-3zM78 13h3v1h-3zM69 14h12v3h-12zM69 18h18v3h-18zM84 7h3v14h-3zM87 13L91.8 10H94.5V10.6L88.2 15.6L87 16Z M87 14.2L88.6 14.2L94.5 19.6V21H91.8L87 17Z" fill="#ffff00" shape-rendering="crispEdges"/><rect x="115" y="3" width="23" height="21" fill="#aeaab2" shape-rendering="crispEdges" /><rect x="116" y="4" width="21" height="19" fill="#000000" shape-rendering="crispEdges" /><rect x="140" y="3" width="23" height="21" fill="#aeaab2" shape-rendering="crispEdges" /><rect x="141" y="4" width="21" height="19" fill="#000000" shape-rendering="crispEdges" /><rect x="165" y="3" width="23" height="21" fill="#aeaab2" shape-rendering="crispEdges" /><rect x="166" y="4" width="21" height="19" fill="#000000" shape-rendering="crispEdges" /><polyline points="116.50,8.72 116.75,8.32 117.00,7.94 117.25,7.57 117.50,7.23 117.75,6.93 118.00,6.68 118.25,6.47 118.50,6.32 118.75,6.23 119.00,6.20 119.25,6.23 119.50,6.32 119.75,6.47 120.00,6.68 120.25,6.93 120.50,7.23 120.75,7.57 121.00,7.94 121.25,8.32 121.50,8.72 121.75,9.12 122.00,9.51 122.25,9.89 122.50,10.24 122.75,10.55 123.00,10.83 123.25,11.05 123.50,11.22 123.75,11.34 124.00,11.40 124.25,11.39 124.50,11.32 124.75,11.19 125.00,11.01 125.25,10.77 125.50,10.49 125.75,10.17 126.00,9.81 126.25,9.43 126.50,9.04 126.75,8.64 127.00,8.24 127.25,7.86 127.50,7.50 127.75,7.17 128.00,6.88 128.25,6.63 128.50,6.44 128.75,6.30 129.00,6.22 129.25,6.20 129.50,6.24 129.75,6.35 130.00,6.51 130.25,6.73 130.50,6.99 130.75,7.30 131.00,7.64 131.25,8.01 131.50,8.40 131.75,8.80 132.00,9.20 132.25,9.59 132.50,9.96 132.75,10.30 133.00,10.61 133.25,10.87 133.50,11.09 133.75,11.25 134.00,11.36 134.25,11.40 134.50,11.38 134.75,11.30 135.00,11.16 135.25,10.97 135.50,10.72 135.75,10.43 136.00,10.10 136.25,9.74 136.50,9.36 136.75,8.96 137.00,8.56" fill="none" stroke="#ffff00" stroke-width="2.5" stroke-linecap="round"/><polyline points="116.50,17.80 116.75,17.36 117.00,16.93 117.25,16.53 117.50,16.15 117.75,15.82 118.00,15.53 118.25,15.31 118.50,15.14 118.75,15.03 119.00,15.00 119.25,15.03 119.50,15.14 119.75,15.31 120.00,15.53 120.25,15.82 120.50,16.15 120.75,16.53 121.00,16.93 121.25,17.36 121.50,17.80 121.75,18.24 122.00,18.67 122.25,19.07 122.50,19.45 122.75,19.78 123.00,20.07 123.25,20.29 123.50,20.46 123.75,20.57 124.00,20.60 124.25,20.57 124.50,20.46 124.75,20.29 125.00,20.07 125.25,19.78 125.50,19.45 125.75,19.07 126.00,18.67 126.25,18.24 126.50,17.80 126.75,17.36 127.00,16.93 127.25,16.53 127.50,16.15 127.75,15.82 128.00,15.53 128.25,15.31 128.50,15.14 128.75,15.03 129.00,15.00 129.25,15.03 129.50,15.14 129.75,15.31 130.00,15.53 130.25,15.82 130.50,16.15 130.75,16.53 131.00,16.93 131.25,17.36 131.50,17.80 131.75,18.24 132.00,18.67 132.25,19.07 132.50,19.45 132.75,19.78 133.00,20.07 133.25,20.29 133.50,20.46 133.75,20.57 134.00,20.60 134.25,20.57 134.50,20.46 134.75,20.29 135.00,20.07 135.25,19.78 135.50,19.45 135.75,19.07 136.00,18.67 136.25,18.24 136.50,17.80 136.75,17.36 137.00,16.93" fill="none" stroke="#00ffff" stroke-width="2.5" stroke-linecap="round"/><path d="M144.8 20.2L158.5 6" stroke="#00ff00" stroke-width="2.5" stroke-linecap="round"/><defs><filter id="bl" x="-50%" y="-50%" width="200%" height="200%"><feGaussianBlur stdDeviation="0.9"/></filter></defs><g filter="url(#bl)"><path d="M169 13.5H175V6H183V12.5H185V16H181V21H169Z" fill="#8e8e8e"/><path d="M171 15V20M173.5 15V20M176 8V20M179 8V14" stroke="#b8b8b8" stroke-width="1"/></g><path d="M191 24V6Q191 2.5 195 2.5H233" fill="none" stroke="#352f36" stroke-width="1"/><path d="M245 5h2v19h-2zM245 5h11v2h-11zM247 3h1v6h-1zM249 3h1v6h-1zM251 3h1v6h-1zM253 3h1v6h-1zM254 5h2v19h-2zM254 22h9v2h-9zM257 18h1v6h-1zM259 18h1v6h-1zM261 18h1v6h-1zM241 20h5v3h-5zM243 17h1v7h-1zM241 20h1v4h-1z" fill="#d8ffff" shape-rendering="crispEdges"/><path d="M242 21h1v1h-1zM244 21h1v1h-1z" fill="#565854" shape-rendering="crispEdges"/><path d="M268.5 4.5H281.5V7.5H277V22H273V7.5H268.5Z" fill="#00ee00"/><path d="M290 12H306V15.5H304V19H302V15.5H300V19H298V15.5H296V19H294V15.5H291Z" fill="#3e403d"/><ellipse cx="309.5" cy="14.8" rx="3.6" ry="5.8" fill="#3e403d"/><rect x="308.5" y="12" width="2" height="6" fill="#565854"/><path d="M315.5 3.5H335.5V22.5H318.5L315.5 19.5Z" fill="none" stroke="#b4ecdc" stroke-width="1"/><path d="M316.5 4.5H334.5V21.5H319L316.5 19Z" fill="none" stroke="#6a58d0" stroke-width="0.9"/><path d="M319.5 3.5V12.5H332.5V3.5" fill="none" stroke="#c8d8f0" stroke-width="1"/><path d="M320.5 4V11.5H331.5V4" fill="none" stroke="#8070e0" stroke-width="0.8"/><path d="M321 5V11" stroke="#2010a0" stroke-width="1.2"/><rect x="321" y="15" width="10" height="7" fill="#d0fff8"/><path d="M323.5 16.5v5" stroke="#2818a8" stroke-width="1.1"/><path d="M345 3H358V13H345Z" fill="none" stroke="#454843" stroke-width="1.6"/><path d="M347 6H356M347 9H356M347 11.5H356" stroke="#454843" stroke-width="1.2"/><rect x="341.8" y="13.8" width="19.4" height="9.4" rx="1.5" fill="none" stroke="#454843" stroke-width="1.6"/><rect x="344" y="17" width="15" height="3" fill="#454843"/><rect x="366" y="1" width="1" height="26" fill="#000000" shape-rendering="crispEdges" /><rect x="367" y="1" width="1" height="26" fill="#8a8a8a" shape-rendering="crispEdges" /><rect x="393" y="3" width="114" height="22" fill="#5a5aa0" shape-rendering="crispEdges" /><rect x="394" y="4" width="112" height="20" fill="#000000" shape-rendering="crispEdges" /><polyline points="395.0,14.0 395.5,17.2 396.0,18.5 396.5,17.2 397.0,14.0 397.5,10.8 398.0,9.5 398.5,10.8 399.0,14.0 399.5,17.2 400.0,18.5 400.5,17.2 401.0,14.0 401.5,10.8 402.0,9.5 402.5,10.8 403.0,14.0 403.5,17.2 404.0,18.5 404.5,17.2 405.0,14.0" fill="none" stroke="#1a7070" stroke-width="0.9"/><polyline points="496.0,14.0 496.5,17.2 497.0,18.5 497.5,17.2 498.0,14.0 498.5,10.8 499.0,9.5 499.5,10.8 500.0,14.0 500.5,17.2 501.0,18.5 501.5,17.2 502.0,14.0 502.5,10.8 503.0,9.5 503.5,10.8 504.0,14.0 504.5,17.2 505.0,18.5 505.5,17.2 506.0,14.0" fill="none" stroke="#1a7070" stroke-width="0.9"/><rect x="404" y="3" width="92" height="22" fill="#ff6a10" shape-rendering="crispEdges" /><rect x="406" y="5" width="88" height="18" fill="#000000" shape-rendering="crispEdges" /><polyline points="408.0,20.06 408.5,20.50 409.0,19.90 409.5,18.35 410.0,16.11 410.5,13.53 411.0,11.03 411.5,9.00 412.0,7.77 412.5,7.54 413.0,8.34 413.5,10.05 414.0,12.39 414.5,14.99 415.0,17.43 415.5,19.32 416.0,20.36 416.5,20.38 417.0,19.38 417.5,17.52 418.0,15.10 418.5,12.50 419.0,10.14 419.5,8.40 420.0,7.55 420.5,7.74 421.0,8.93 421.5,10.93 422.0,13.42 422.5,16.01 423.0,18.27 423.5,19.85 424.0,20.49 424.5,20.10 425.0,18.73 425.5,16.60 426.0,14.05 426.5,11.50 427.0,9.35 427.5,7.94 428.0,7.50 428.5,8.10 429.0,9.65 429.5,11.89 430.0,14.47 430.5,16.97 431.0,19.00 431.5,20.23 432.0,20.46 432.5,19.66 433.0,17.95 433.5,15.61 434.0,13.01 434.5,10.57 435.0,8.68 435.5,7.64 436.0,7.62 436.5,8.62 437.0,10.48 437.5,12.90 438.0,15.50 438.5,17.86 439.0,19.60 439.5,20.45 440.0,20.26 440.5,19.07 441.0,17.07 441.5,14.58 442.0,11.99 442.5,9.73 443.0,8.15 443.5,7.51 444.0,7.90 444.5,9.27 445.0,11.40 445.5,13.95 446.0,16.50 446.5,18.65 447.0,20.06 447.5,20.50 448.0,19.90 448.5,18.35 449.0,16.11 449.5,13.53 450.0,11.03 450.5,9.00 451.0,7.77 451.5,7.54 452.0,8.34 452.5,10.05 453.0,12.39 453.5,14.99 454.0,17.43 454.5,19.32 455.0,20.36 455.5,20.38 456.0,19.38 456.5,17.52 457.0,15.10 457.5,12.50 458.0,10.14 458.5,8.40 459.0,7.55 459.5,7.74 460.0,8.93 460.5,10.93 461.0,13.42 461.5,16.01 462.0,18.27 462.5,19.85 463.0,20.49 463.5,20.10 464.0,18.73 464.5,16.60 465.0,14.05 465.5,11.50 466.0,9.35 466.5,7.94 467.0,7.50 467.5,8.10 468.0,9.65 468.5,11.89 469.0,14.47 469.5,16.97 470.0,19.00 470.5,20.23 471.0,20.46 471.5,19.66 472.0,17.95 472.5,15.61 473.0,13.01 473.5,10.57 474.0,8.68 474.5,7.64 475.0,7.62 475.5,8.62 476.0,10.48 476.5,12.90 477.0,15.50 477.5,17.86 478.0,19.60 478.5,20.45 479.0,20.26 479.5,19.07 480.0,17.07 480.5,14.58 481.0,11.99 481.5,9.73 482.0,8.15 482.5,7.51 483.0,7.90 483.5,9.27 484.0,11.40 484.5,13.95 485.0,16.50 485.5,18.65 486.0,20.06 486.5,20.50 487.0,19.90 487.5,18.35 488.0,16.11 488.5,13.53 489.0,11.03 489.5,9.00 490.0,7.77 490.5,7.54 491.0,8.34 491.5,10.05 492.0,12.39 492.5,14.99 493.0,17.43 493.5,19.32 494.0,20.36 494.5,20.38 495.0,19.38 495.5,17.52" fill="none" stroke="#00f0ff" stroke-width="2"/><rect x="521" y="3" width="23" height="22" fill="#b4b4b4" shape-rendering="crispEdges" /><rect x="522" y="4" width="21" height="20" fill="#000000" shape-rendering="crispEdges" /><text x="532.5" y="20.5" font-size="16" fill="#c8ffff" text-anchor="middle" font-weight="bold" textLength="15" lengthAdjust="spacingAndGlyphs" >W</text><rect x="547" y="3" width="99" height="21" fill="#000000" shape-rendering="crispEdges" rx="10"/><text x="596" y="21" font-size="18" fill="#ffffff" text-anchor="middle" textLength="67.06" lengthAdjust="spacing" transform="translate(596 0) scale(0.85 1) translate(-596 0)" stroke="#000" stroke-width="0.25">8.00ms</text><text x="717" y="20.8" font-size="21" fill="#ffffff" text-anchor="middle" font-weight="normal" textLength="77" lengthAdjust="spacingAndGlyphs"  stroke="#3c423d" stroke-width="0.3">UTILITY</text><rect x="777" y="3" width="21" height="21" fill="#ff3300" shape-rendering="crispEdges" /><path d="M782.3 7L793.2 19.6M793.2 7L782.3 19.6" stroke="#ffffff" stroke-width="2.6" stroke-linecap="round"/><path d="M673.5 101.5V68.5L677.5 64.5H778.5" fill="none" stroke="#c8c8c8" stroke-width="1"/><path d="M778.5 64.5L782.5 68.5V101.5L778.5 105.5H677.5L673.5 101.5" fill="none" stroke="#2a2a2a" stroke-width="1"/><path d="M677.5 105.5L673.5 101.5" fill="none" stroke="#c8c8c8" stroke-width="1"/><path d="M673.5 182.5V149.5L677.5 145.5H778.5" fill="none" stroke="#c8c8c8" stroke-width="1"/><path d="M778.5 145.5L782.5 149.5V182.5L778.5 186.5H677.5L673.5 182.5" fill="none" stroke="#2a2a2a" stroke-width="1"/><path d="M677.5 186.5L673.5 182.5" fill="none" stroke="#c8c8c8" stroke-width="1"/><path d="M673.5 258.5V225.5L677.5 221.5H778.5" fill="none" stroke="#c8c8c8" stroke-width="1"/><path d="M778.5 221.5L782.5 225.5V258.5L778.5 262.5H677.5L673.5 258.5" fill="none" stroke="#2a2a2a" stroke-width="1"/><path d="M677.5 262.5L673.5 258.5" fill="none" stroke="#c8c8c8" stroke-width="1"/><path d="M673.5 342.5V309.5L677.5 305.5H778.5" fill="none" stroke="#c8c8c8" stroke-width="1"/><path d="M778.5 305.5L782.5 309.5V342.5L778.5 346.5H677.5L673.5 342.5" fill="none" stroke="#2a2a2a" stroke-width="1"/><path d="M677.5 346.5L673.5 342.5" fill="none" stroke="#c8c8c8" stroke-width="1"/><path d="M678.5 468.5V452.5L682.5 448.5H773.5" fill="none" stroke="#c8c8c8" stroke-width="1"/><path d="M773.5 448.5L777.5 452.5V468.5L773.5 472.5H682.5L678.5 468.5" fill="none" stroke="#2a2a2a" stroke-width="1"/><path d="M682.5 472.5L678.5 468.5" fill="none" stroke="#c8c8c8" stroke-width="1"/><text x="727.5" y="85" font-size="18" fill="#ffffff" text-anchor="middle" textLength="69.41" lengthAdjust="spacing" transform="translate(727.5 0) scale(0.85 1) translate(-727.5 0)" stroke="#777777" stroke-width="0.25">System</text><text x="727.5" y="103" font-size="18" fill="#ffffff" text-anchor="middle" textLength="64.71" lengthAdjust="spacing" transform="translate(727.5 0) scale(0.85 1) translate(-727.5 0)" stroke="#777777" stroke-width="0.25">Status</text><text x="727.5" y="166" font-size="18" fill="#ffffff" text-anchor="middle" textLength="69.41" lengthAdjust="spacing" transform="translate(727.5 0) scale(0.85 1) translate(-727.5 0)" stroke="#777777" stroke-width="0.25">Update</text><text x="727.5" y="184" font-size="18" fill="#ffffff" text-anchor="middle" textLength="87.06" lengthAdjust="spacing" transform="translate(727.5 0) scale(0.85 1) translate(-727.5 0)" stroke="#777777" stroke-width="0.25">Firmware</text><text x="727.5" y="242" font-size="18" fill="#ffffff" text-anchor="middle" textLength="47.06" lengthAdjust="spacing" transform="translate(727.5 0) scale(0.85 1) translate(-727.5 0)" stroke="#777777" stroke-width="0.25">Save</text><text x="727.5" y="259.5" font-size="18" fill="#ffffff" text-anchor="middle" textLength="90.59" lengthAdjust="spacing" transform="translate(727.5 0) scale(0.85 1) translate(-727.5 0)" stroke="#777777" stroke-width="0.25">Waveform</text><text x="727.5" y="333" font-size="18" fill="#ffffff" text-anchor="middle" textLength="110.59" lengthAdjust="spacing" transform="translate(727.5 0) scale(0.85 1) translate(-727.5 0)" stroke="#777777" stroke-width="0.25">Do Self Cal</text><text x="728" y="467" font-size="18" fill="#ffffff" text-anchor="middle" textLength="87.06" lengthAdjust="spacing" transform="translate(728 0) scale(0.85 1) translate(-728 0)" stroke="#777777" stroke-width="0.25">Page 1/4</text><text x="16" y="471" font-size="18" fill="#ffff00" text-anchor="start" textLength="35.29" lengthAdjust="spacing" transform="translate(16 0) scale(0.85 1) translate(-16 0)" stroke="#565854" stroke-width="0.3">CH1</text><rect x="48" y="453" width="62" height="22" fill="#000000" shape-rendering="crispEdges" rx="11"/><text x="79" y="472.8" font-size="17" fill="#ffff00" text-anchor="middle" textLength="48.24" lengthAdjust="spacing" transform="translate(79 0) scale(0.85 1) translate(-79 0)" stroke="#000" stroke-width="0.3">1.00V</text><text x="116" y="471" font-size="18" fill="#00ffff" text-anchor="start" textLength="35.29" lengthAdjust="spacing" transform="translate(116 0) scale(0.85 1) translate(-116 0)" stroke="#565854" stroke-width="0.3">CH2</text><rect x="148" y="453" width="62" height="22" fill="#000000" shape-rendering="crispEdges" rx="11"/><text x="179" y="472.8" font-size="17" fill="#00ffff" text-anchor="middle" textLength="48.24" lengthAdjust="spacing" transform="translate(179 0) scale(0.85 1) translate(-179 0)" stroke="#000" stroke-width="0.3">1.00V</text><text x="216" y="471" font-size="18" fill="#ff2000" text-anchor="start" textLength="35.29" lengthAdjust="spacing" transform="translate(216 0) scale(0.85 1) translate(-216 0)" stroke="#565854" stroke-width="0.3">CH3</text><rect x="248" y="453" width="62" height="22" fill="#000000" shape-rendering="crispEdges" rx="11"/><text x="279" y="472.8" font-size="17" fill="#ff2000" text-anchor="middle" textLength="48.24" lengthAdjust="spacing" transform="translate(279 0) scale(0.85 1) translate(-279 0)" stroke="#000" stroke-width="0.3">1.00V</text><text x="316" y="471" font-size="18" fill="#00ff00" text-anchor="start" textLength="35.29" lengthAdjust="spacing" transform="translate(316 0) scale(0.85 1) translate(-316 0)" stroke="#565854" stroke-width="0.3">CH4</text><rect x="348" y="453" width="62" height="22" fill="#000000" shape-rendering="crispEdges" rx="11"/><text x="379" y="472.8" font-size="17" fill="#00ff00" text-anchor="middle" textLength="48.24" lengthAdjust="spacing" transform="translate(379 0) scale(0.85 1) translate(-379 0)" stroke="#000" stroke-width="0.3">1.00V</text><text x="418.5" y="470" font-size="16" fill="#ffff00" text-anchor="start" textLength="35.29" lengthAdjust="spacing" transform="translate(418.5 0) scale(0.85 1) translate(-418.5 0)" stroke="#565854" stroke-width="0.3">CH1</text><path d="M453 456.5H459.5L465 471.5H470.5" fill="none" stroke="#6ab4ff" stroke-width="2"/><rect x="473" y="453" width="70" height="22" fill="#000000" shape-rendering="crispEdges" rx="11"/><text x="509" y="470" font-size="16" fill="#ffff00" text-anchor="middle" textLength="46.47" lengthAdjust="spacing" transform="translate(509 0) scale(0.85 1) translate(-509 0)" stroke="#000" stroke-width="0.3">1.72V</text><rect x="550" y="453" width="100" height="22" fill="#000000" shape-rendering="crispEdges" rx="11"/><text x="601" y="470" font-size="16" fill="#ffff00" text-anchor="middle" textLength="87.65" lengthAdjust="spacing" transform="translate(601 0) scale(0.85 1) translate(-601 0)" stroke="#000" stroke-width="0.3">10.0000Hz</text>
</svg>
</body></html>
